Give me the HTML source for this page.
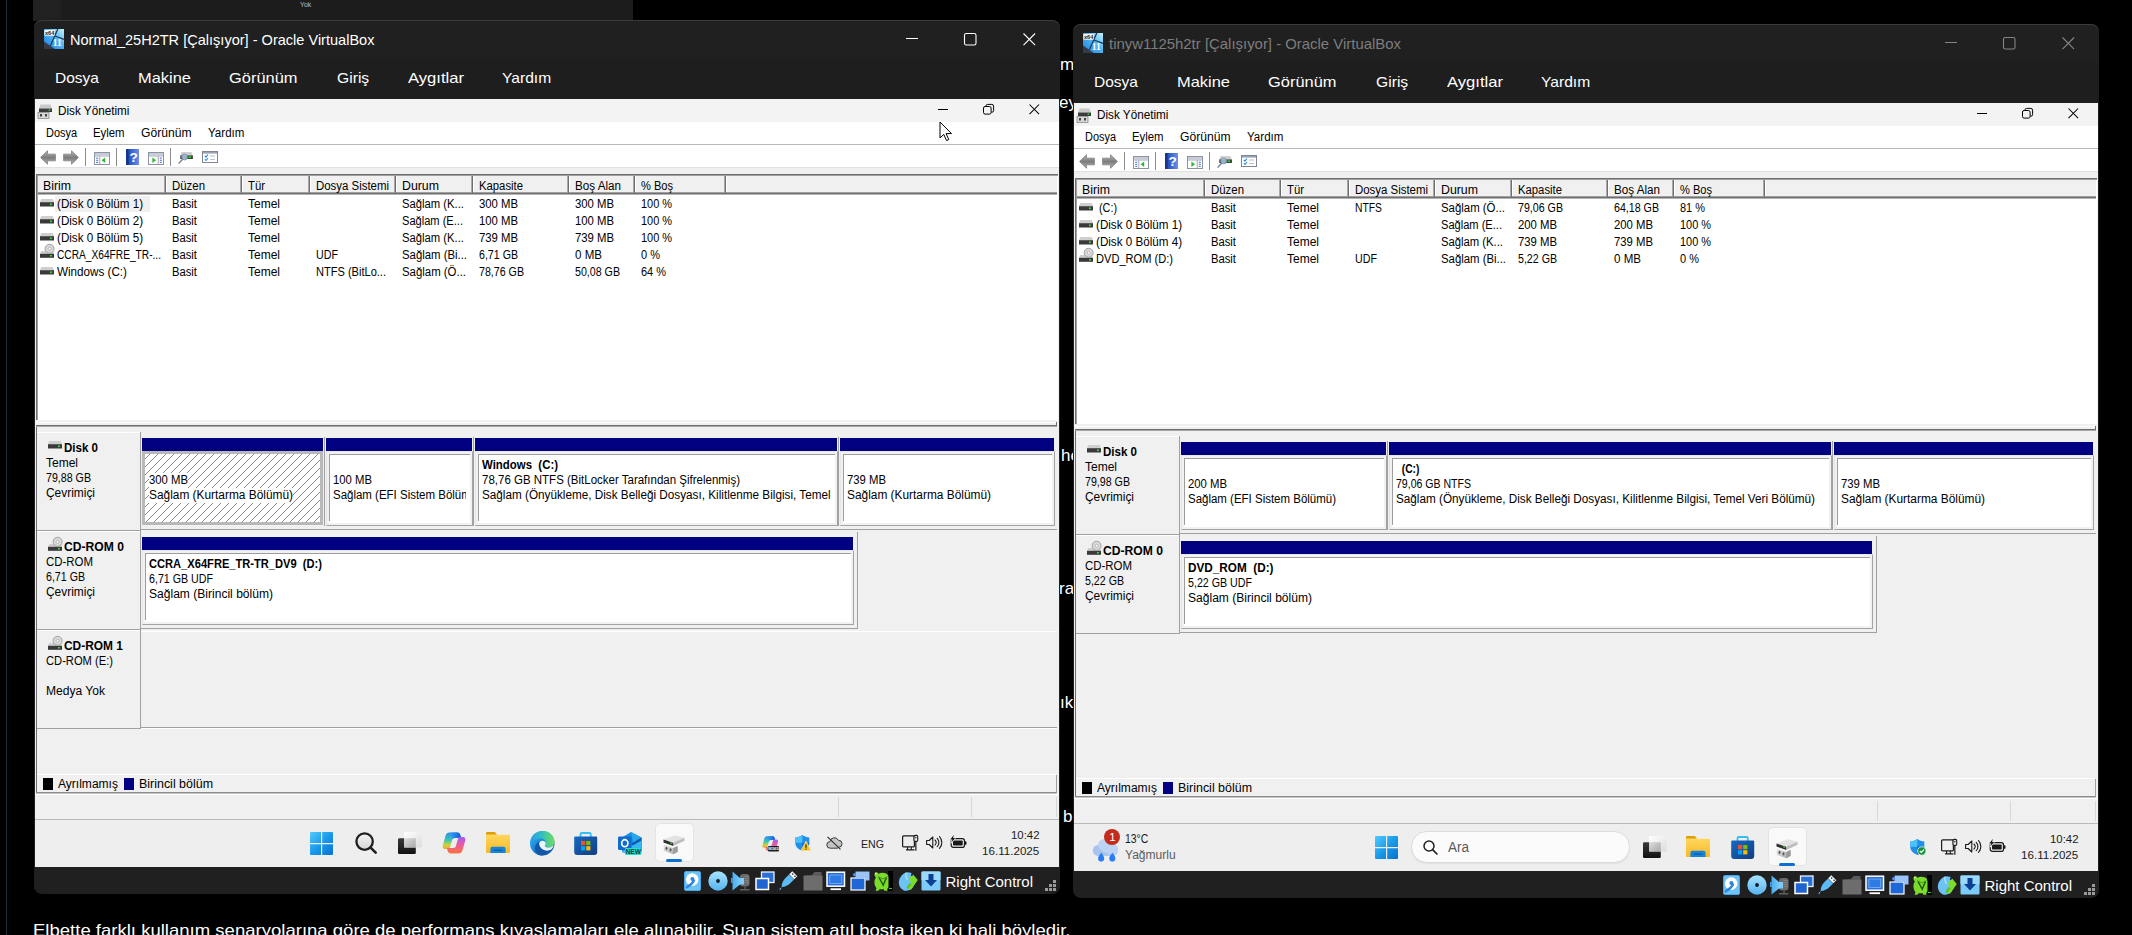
<!DOCTYPE html>
<html lang="tr"><head><meta charset="utf-8"><title>VirtualBox - Disk Yönetimi</title>
<style>
html,body{margin:0;padding:0;background:#000;}
html{width:2132px;height:935px;overflow:hidden;font-family:"Liberation Sans", sans-serif;}
body{width:2132px;height:935px;overflow:hidden;position:relative;font-family:"Liberation Sans", sans-serif;font-size:12px;line-height:12px;color:#000;}
#root{position:absolute;left:0;top:0;width:2132px;height:935px;overflow:hidden;background:#000;}
.a{position:absolute;display:block;}
.t{position:absolute;white-space:pre;transform-origin:left top;}
.win{position:absolute;width:1026px;height:874px;background:#202020;border-radius:8px;overflow:hidden;box-shadow:inset 0 1px 0 #3b3b3b;}
.guest{position:absolute;left:1px;top:79px;width:1024px;height:768px;background:#f0f0f0;overflow:hidden;}
svg{overflow:visible}
</style></head>
<body>
<div id="root">
<div class="a" style="left:33px;top:0px;width:600px;height:21px;background:#1c1c1c;"></div><div class="a" style="left:33px;top:0px;width:28px;height:21px;background:#212121;"></div><span id="t0" class="t" style="left:300px;top:2px;font-size:6.8px;line-height:6.8px;color:#bdbdbd;">Yok</span><div class="a" style="left:6px;top:0px;width:1px;height:935px;background:#15303f;"></div><div class="a" style="left:1059px;top:0;width:15px;height:935px;overflow:hidden"><span id="t1" class="t" style="left:1px;top:55.5px;font-size:17px;line-height:17px;color:#fff;">m</span><span id="t2" class="t" style="left:0px;top:93.5px;font-size:17px;line-height:17px;color:#fff;">ey</span><span id="t3" class="t" style="left:2px;top:446.5px;font-size:17px;line-height:17px;color:#fff;">he</span><span id="t4" class="t" style="left:0px;top:579.5px;font-size:17px;line-height:17px;color:#fff;">ra</span><span id="t5" class="t" style="left:1px;top:693.5px;font-size:17px;line-height:17px;color:#fff;">ık</span><span id="t6" class="t" style="left:4px;top:807.5px;font-size:17px;line-height:17px;color:#fff;">b</span></div><span id="t7" class="t" style="left:33px;top:922px;font-size:17px;line-height:17px;color:#fff;transform:scaleX(1.0903);">Elbette farklı kullanım senaryolarına göre de performans kıyaslamaları ele alınabilir. Şuan sistem atıl boşta iken ki hali böyledir.</span><div class="win" style="left:34px;top:20px"><div class="a" style="left:0px;top:38px;width:1026px;height:41px;background:#1e1e1e;"></div><svg class="a" style="left:10px;top:9px;" width="20" height="20" viewBox="0 0 20 20"><defs><linearGradient id="vbg" x1="0" y1="1" x2="1" y2="0"><stop offset="0" stop-color="#1b7fe0"/><stop offset=".55" stop-color="#4fb4f2"/><stop offset="1" stop-color="#c9f1ff"/></linearGradient></defs>
<rect width="20" height="20" fill="url(#vbg)"/>
<polygon points="0,12.5 10.8,20 0,20" fill="#353a48"/>
<path d="M13.8 0 L6.4 16.8 M11 7 L20 10.3" stroke="#1d3a5c" stroke-width="1.3" fill="none"/>
<rect x="0.3" y="1" width="10.6" height="5.8" rx="1.2" fill="#f4f4f4"/>
<text x="5.6" y="6" font-family="Liberation Sans" font-size="5.6" font-weight="700" text-anchor="middle" fill="#222">x64</text>
<text x="13.2" y="17" font-family="Liberation Serif" font-size="9.5" font-weight="700" text-anchor="middle" fill="#fff">11</text></svg><span id="t8" class="t" style="left:36px;top:11.5px;font-size:15px;line-height:15px;color:#fff;transform:scaleX(0.9697);">Normal_25H2TR [Çalışıyor] - Oracle VirtualBox</span><svg class="a" style="left:866px;top:6px;" width="150" height="26" viewBox="0 0 150 26"><path d="M6 12.500h12" stroke="#fff" stroke-width="1.100"/><rect x="64.500" y="7.500" width="11.500" height="11.500" rx="1.800" fill="none" stroke="#fff" stroke-width="1.100"/><path d="M123.500 7.500l11.600 11.600M135.100 7.500l-11.600 11.600" stroke="#fff" stroke-width="1.100"/></svg><span id="t9" class="t" style="left:21.4px;top:50.5px;font-size:14.6px;line-height:14.6px;color:#fff;transform:scaleX(1.0634);">Dosya</span><span id="t10" class="t" style="left:104px;top:50.5px;font-size:14.6px;line-height:14.6px;color:#fff;transform:scaleX(1.1265);">Makine</span><span id="t11" class="t" style="left:195px;top:50.5px;font-size:14.6px;line-height:14.6px;color:#fff;transform:scaleX(1.1258);">Görünüm</span><span id="t12" class="t" style="left:302.5px;top:50.5px;font-size:14.6px;line-height:14.6px;color:#fff;transform:scaleX(1.0733);">Giriş</span><span id="t13" class="t" style="left:374px;top:50.5px;font-size:14.6px;line-height:14.6px;color:#fff;transform:scaleX(1.1378);">Aygıtlar</span><span id="t14" class="t" style="left:468.3px;top:50.5px;font-size:14.6px;line-height:14.6px;color:#fff;transform:scaleX(1.0703);">Yardım</span><div class="guest"><div class="a" style="left:0px;top:0px;width:1024px;height:23px;background:#f3f3f3;"></div><svg class="a" style="left:2px;top:4px;" width="16" height="16" viewBox="0 0 16 16"><path d="M3.5 1.5h10l1.5 4h-13z" fill="#c9c9c9"/><rect x="2" y="5.5" width="13" height="3.5" fill="#3c3c3c"/><rect x="11.6" y="6.4" width="1.6" height="1.4" fill="#35d335"/>
<rect x="1" y="9.5" width="11" height="6" fill="#d8d8d8" stroke="#8a8a8a" stroke-width=".8"/><rect x="3" y="11" width="2" height="2.5" fill="#444"/><rect x="8" y="11" width="2" height="2.5" fill="#444"/></svg><span id="t15" class="t" style="left:23px;top:6px;transform:scaleX(0.9762);">Disk Yönetimi</span><svg class="a" style="left:898px;top:0px;" width="116" height="23" viewBox="0 0 116 23"><path d="M5 10.5h10" stroke="#000" stroke-width="1"/><rect x="50.5" y="7.5" width="7.6" height="7.6" rx="1.6" fill="none" stroke="#000"/><path d="M53 7.3V7a1.6 1.6 0 0 1 1.6-1.6h4.2A1.8 1.8 0 0 1 60.6 7.2v4.4a1.6 1.6 0 0 1-1.6 1.6h-.6" fill="none" stroke="#000"/><path d="M96.5 5.5l9.6 9.6M106.1 5.5l-9.6 9.6" stroke="#000" stroke-width="1.05"/></svg><div class="a" style="left:0px;top:23px;width:1024px;height:22px;background:#fff;"></div><span id="t16" class="t" style="left:10.6px;top:27.5px;transform:scaleX(0.9113);">Dosya</span><span id="t17" class="t" style="left:58px;top:27.5px;transform:scaleX(0.9477);">Eylem</span><span id="t18" class="t" style="left:106px;top:27.5px;transform:scaleX(1.0094);">Görünüm</span><span id="t19" class="t" style="left:173px;top:27.5px;transform:scaleX(0.9630);">Yardım</span><div class="a" style="left:0px;top:45px;width:1024px;height:1px;background:#b8b8b8;"></div><div class="a" style="left:0px;top:46px;width:1024px;height:22px;background:#fff;"></div><svg class="a" style="left:5px;top:51px;" width="16" height="15" viewBox="0 0 16 15"><defs><linearGradient id="ag" x1="0" y1="0" x2="0" y2="1"><stop offset="0" stop-color="#b9b9b9"/><stop offset=".5" stop-color="#7d7d7d"/><stop offset="1" stop-color="#b0b0b0"/></linearGradient></defs><path d="M0.6 7.5 L7.5 0.8 V4.2 H15.4 V10.8 H7.5 V14.2 Z" fill="url(#ag)" stroke="#8f8f8f" stroke-width="1" stroke-linejoin="round"/></svg><svg class="a" style="left:28px;top:51px;" width="16" height="15" viewBox="0 0 16 15"><g transform="translate(16,0) scale(-1,1)"><defs><linearGradient id="ag2" x1="0" y1="0" x2="0" y2="1"><stop offset="0" stop-color="#b9b9b9"/><stop offset=".5" stop-color="#7d7d7d"/><stop offset="1" stop-color="#b0b0b0"/></linearGradient></defs><path d="M0.6 7.5 L7.5 0.8 V4.2 H15.4 V10.8 H7.5 V14.2 Z" fill="url(#ag2)" stroke="#8f8f8f" stroke-width="1" stroke-linejoin="round"/></g></svg><div class="a" style="left:50px;top:49px;width:1px;height:18px;background:#8c8c8c;"></div><div class="a" style="left:81px;top:49px;width:1px;height:18px;background:#8c8c8c;"></div><div class="a" style="left:135px;top:49px;width:1px;height:18px;background:#8c8c8c;"></div><svg class="a" style="left:59px;top:53px;" width="16" height="13" viewBox="0 0 16 13"><rect x=".5" y=".5" width="15" height="12" fill="#fff" stroke="#8b93a5"/><rect x="1" y="1" width="14" height="2.2" fill="#c7ccd8"/><rect x="1" y="3.6" width="14" height=".8" fill="#8b93a5"/><rect x="5.4" y="4.4" width=".8" height="8" fill="#8b93a5"/><path d="M2.2 6.2h2M2.2 8.3h2M2.2 10.4h2" stroke="#2f6fd6" stroke-width="1"/><path d="M11.2 5.6v5.4L7.6 8.3z" fill="#2fb52f"/></svg><svg class="a" style="left:91px;top:50px;" width="13" height="16" viewBox="0 0 13 16"><defs><linearGradient id="hg" x1="0" y1="0" x2="1" y2="0"><stop offset="0" stop-color="#1c3f9e"/><stop offset=".3" stop-color="#2b57c8"/><stop offset="1" stop-color="#6f8fe8"/></linearGradient></defs><rect width="13" height="16" fill="url(#hg)"/><rect width="2.6" height="16" fill="#17358a"/><text x="7.6" y="13" font-family="Liberation Sans" font-weight="700" font-size="13.5" text-anchor="middle" fill="#fff">?</text></svg><svg class="a" style="left:113px;top:53px;" width="16" height="13" viewBox="0 0 16 13"><rect x=".5" y=".5" width="15" height="12" fill="#fff" stroke="#8b93a5"/><rect x="1" y="1" width="14" height="2.2" fill="#c7ccd8"/><rect x="1" y="3.6" width="14" height=".8" fill="#8b93a5"/><rect x="9.8" y="4.4" width=".8" height="8" fill="#8b93a5"/><path d="M11.8 6.2h2M11.8 8.3h2M11.8 10.4h2" stroke="#2f6fd6" stroke-width="1"/><path d="M4.4 5.6v5.4L8 8.3z" fill="#2fb52f"/></svg><svg class="a" style="left:143px;top:52px;" width="16" height="14" viewBox="0 0 16 14"><path d="M3.5 1h10l1.2 3.4H2.3z" fill="#cfcfcf"/><rect x="2.3" y="4.4" width="12.6" height="3.6" fill="#3a3a3a"/><rect x="10.5" y="5.3" width="2.6" height="1.8" fill="#28d028"/><circle cx="6.6" cy="6" r="2.9" fill="#a9c7e8" fill-opacity=".85" stroke="#7b8da3" stroke-width=".9"/><path d="M4.6 8.2L0.6 12.6" stroke="#6c7a8a" stroke-width="1.3"/></svg><svg class="a" style="left:167px;top:52px;" width="16" height="12" viewBox="0 0 16 12"><rect x=".5" y=".5" width="15" height="11" fill="#fff" stroke="#7f8796"/><rect x="1" y="1" width="14" height="1.6" fill="#9aa1b0"/><path d="M2.8 4.8l1.2 1.3 2-2.4M2.8 8.2l1.2 1.3 2-2.4" stroke="#2e8be6" stroke-width="1.1" fill="none"/><path d="M8 5h5M8 8.6h5" stroke="#b8bcc6" stroke-width="1"/></svg><div class="a" style="left:0px;top:68px;width:1024px;height:1px;background:#e2e2e2;"></div><div class="a" style="left:1px;top:75px;width:1022px;height:246px;background:#fff;"></div><div class="a" style="left:1px;top:75px;width:1022px;height:1px;background:#707070;"></div><div class="a" style="left:1px;top:76px;width:1022px;height:1px;background:#a0a0a0;"></div><div class="a" style="left:1px;top:75px;width:1px;height:246px;background:#707070;"></div><div class="a" style="left:2px;top:76px;width:1px;height:245px;background:#a0a0a0;"></div><div class="a" style="left:3px;top:77px;width:1019px;height:17px;background:#f0f0f0;"></div><div class="a" style="left:3px;top:93px;width:1019px;height:1px;background:#a0a0a0;"></div><div class="a" style="left:3px;top:94px;width:1019px;height:1px;background:#6f6f6f;"></div><div class="a" style="left:3px;top:95px;width:1019px;height:1px;background:#b4b4b4;"></div><span id="t20" class="t" style="left:8px;top:81px;transform:scaleX(1.0246);">Birim</span><span id="t21" class="t" style="left:137px;top:81px;transform:scaleX(0.9514);">Düzen</span><span id="t22" class="t" style="left:213px;top:81px;transform:scaleX(0.9444);">Tür</span><span id="t23" class="t" style="left:281px;top:81px;transform:scaleX(0.9519);">Dosya Sistemi</span><span id="t24" class="t" style="left:367px;top:81px;transform:scaleX(1.0273);">Durum</span><span id="t25" class="t" style="left:444px;top:81px;transform:scaleX(0.9421);">Kapasite</span><span id="t26" class="t" style="left:540px;top:81px;transform:scaleX(0.9710);">Boş Alan</span><span id="t27" class="t" style="left:606px;top:81px;transform:scaleX(0.9225);">% Boş</span><div class="a" style="left:129px;top:77px;width:1px;height:16px;background:#a9a9a9;"></div><div class="a" style="left:130px;top:77px;width:1px;height:17px;background:#6f6f6f;"></div><div class="a" style="left:131px;top:77px;width:1px;height:16px;background:#fff;"></div><div class="a" style="left:205px;top:77px;width:1px;height:16px;background:#a9a9a9;"></div><div class="a" style="left:206px;top:77px;width:1px;height:17px;background:#6f6f6f;"></div><div class="a" style="left:207px;top:77px;width:1px;height:16px;background:#fff;"></div><div class="a" style="left:273px;top:77px;width:1px;height:16px;background:#a9a9a9;"></div><div class="a" style="left:274px;top:77px;width:1px;height:17px;background:#6f6f6f;"></div><div class="a" style="left:275px;top:77px;width:1px;height:16px;background:#fff;"></div><div class="a" style="left:359px;top:77px;width:1px;height:16px;background:#a9a9a9;"></div><div class="a" style="left:360px;top:77px;width:1px;height:17px;background:#6f6f6f;"></div><div class="a" style="left:361px;top:77px;width:1px;height:16px;background:#fff;"></div><div class="a" style="left:436px;top:77px;width:1px;height:16px;background:#a9a9a9;"></div><div class="a" style="left:437px;top:77px;width:1px;height:17px;background:#6f6f6f;"></div><div class="a" style="left:438px;top:77px;width:1px;height:16px;background:#fff;"></div><div class="a" style="left:532px;top:77px;width:1px;height:16px;background:#a9a9a9;"></div><div class="a" style="left:533px;top:77px;width:1px;height:17px;background:#6f6f6f;"></div><div class="a" style="left:534px;top:77px;width:1px;height:16px;background:#fff;"></div><div class="a" style="left:598px;top:77px;width:1px;height:16px;background:#a9a9a9;"></div><div class="a" style="left:599px;top:77px;width:1px;height:17px;background:#6f6f6f;"></div><div class="a" style="left:600px;top:77px;width:1px;height:16px;background:#fff;"></div><div class="a" style="left:689px;top:77px;width:1px;height:16px;background:#a9a9a9;"></div><div class="a" style="left:690px;top:77px;width:1px;height:17px;background:#6f6f6f;"></div><div class="a" style="left:691px;top:77px;width:1px;height:16px;background:#fff;"></div><div class="a" style="left:20px;top:97px;width:95px;height:16px;background:#f0f0f0;"></div><svg class="a" style="left:5px;top:100px;" width="14" height="8" viewBox="0 0 14 8"><path d="M1.2 0h11.6l1.2 3.2H0z" fill="#cfcfcf"/><rect x="0" y="3.2" width="14" height="4.3" fill="#3a3a3a"/><rect x="10" y="4.5" width="1.8" height="1.6" fill="#3fe03f"/></svg><span id="t28" class="t" style="left:22px;top:98.5px;transform:scaleX(0.9697);">(Disk 0 Bölüm 1)</span><span id="t29" class="t" style="left:137px;top:98.5px;transform:scaleX(0.9368);">Basit</span><span id="t30" class="t" style="left:213px;top:98.5px;">Temel</span><span id="t31" class="t" style="left:367px;top:98.5px;transform:scaleX(0.9389);">Sağlam (K...</span><span id="t32" class="t" style="left:444px;top:98.5px;transform:scaleX(0.9430);">300 MB</span><span id="t33" class="t" style="left:540px;top:98.5px;transform:scaleX(0.9430);">300 MB</span><span id="t34" class="t" style="left:606px;top:98.5px;transform:scaleX(0.9109);">100 %</span><svg class="a" style="left:5px;top:117px;" width="14" height="8" viewBox="0 0 14 8"><path d="M1.2 0h11.6l1.2 3.2H0z" fill="#cfcfcf"/><rect x="0" y="3.2" width="14" height="4.3" fill="#3a3a3a"/><rect x="10" y="4.5" width="1.8" height="1.6" fill="#3fe03f"/></svg><span id="t35" class="t" style="left:22px;top:115.5px;transform:scaleX(0.9697);">(Disk 0 Bölüm 2)</span><span id="t36" class="t" style="left:137px;top:115.5px;transform:scaleX(0.9368);">Basit</span><span id="t37" class="t" style="left:213px;top:115.5px;">Temel</span><span id="t38" class="t" style="left:367px;top:115.5px;transform:scaleX(0.9238);">Sağlam (E...</span><span id="t39" class="t" style="left:444px;top:115.5px;transform:scaleX(0.9430);">100 MB</span><span id="t40" class="t" style="left:540px;top:115.5px;transform:scaleX(0.9430);">100 MB</span><span id="t41" class="t" style="left:606px;top:115.5px;transform:scaleX(0.9109);">100 %</span><svg class="a" style="left:5px;top:134px;" width="14" height="8" viewBox="0 0 14 8"><path d="M1.2 0h11.6l1.2 3.2H0z" fill="#cfcfcf"/><rect x="0" y="3.2" width="14" height="4.3" fill="#3a3a3a"/><rect x="10" y="4.5" width="1.8" height="1.6" fill="#3fe03f"/></svg><span id="t42" class="t" style="left:22px;top:132.5px;transform:scaleX(0.9697);">(Disk 0 Bölüm 5)</span><span id="t43" class="t" style="left:137px;top:132.5px;transform:scaleX(0.9368);">Basit</span><span id="t44" class="t" style="left:213px;top:132.5px;">Temel</span><span id="t45" class="t" style="left:367px;top:132.5px;transform:scaleX(0.9389);">Sağlam (K...</span><span id="t46" class="t" style="left:444px;top:132.5px;transform:scaleX(0.9430);">739 MB</span><span id="t47" class="t" style="left:540px;top:132.5px;transform:scaleX(0.9430);">739 MB</span><span id="t48" class="t" style="left:606px;top:132.5px;transform:scaleX(0.9109);">100 %</span><svg class="a" style="left:5px;top:145px;" width="15" height="14" viewBox="0 0 15 14"><path d="M1.2 7h11.6l1.2 3H0z" fill="#cfcfcf"/><rect x="0" y="9.8" width="14" height="4" fill="#3a3a3a"/><rect x="10" y="11" width="1.8" height="1.5" fill="#3fe03f"/>
<circle cx="9.6" cy="4.8" r="4.5" fill="#d9d9d9" stroke="#9a9a9a" stroke-width=".9"/><circle cx="9.6" cy="4.8" r="1.5" fill="#fff" stroke="#9a9a9a" stroke-width=".6"/></svg><span id="t49" class="t" style="left:22px;top:149.5px;transform:scaleX(0.8476);">CCRA_X64FRE_TR-...</span><span id="t50" class="t" style="left:137px;top:149.5px;transform:scaleX(0.9368);">Basit</span><span id="t51" class="t" style="left:213px;top:149.5px;">Temel</span><span id="t52" class="t" style="left:281px;top:149.5px;transform:scaleX(0.8917);">UDF</span><span id="t53" class="t" style="left:367px;top:149.5px;transform:scaleX(0.9461);">Sağlam (Bi...</span><span id="t54" class="t" style="left:444px;top:149.5px;transform:scaleX(0.8857);">6,71 GB</span><span id="t55" class="t" style="left:540px;top:149.5px;transform:scaleX(0.9637);">0 MB</span><span id="t56" class="t" style="left:606px;top:149.5px;transform:scaleX(0.9184);">0 %</span><svg class="a" style="left:5px;top:168px;" width="14" height="8" viewBox="0 0 14 8"><path d="M1.2 0h11.6l1.2 3.2H0z" fill="#cfcfcf"/><rect x="0" y="3.2" width="14" height="4.3" fill="#3a3a3a"/><rect x="10" y="4.5" width="1.8" height="1.6" fill="#3fe03f"/></svg><span id="t57" class="t" style="left:22px;top:166.5px;transform:scaleX(0.9720);">Windows (C:)</span><span id="t58" class="t" style="left:137px;top:166.5px;transform:scaleX(0.9368);">Basit</span><span id="t59" class="t" style="left:213px;top:166.5px;">Temel</span><span id="t60" class="t" style="left:281px;top:166.5px;transform:scaleX(0.9209);">NTFS (BitLo...</span><span id="t61" class="t" style="left:367px;top:166.5px;transform:scaleX(0.9501);">Sağlam (Ö...</span><span id="t62" class="t" style="left:444px;top:166.5px;transform:scaleX(0.8875);">78,76 GB</span><span id="t63" class="t" style="left:540px;top:166.5px;transform:scaleX(0.8875);">50,08 GB</span><span id="t64" class="t" style="left:606px;top:166.5px;transform:scaleX(0.9138);">64 %</span><div class="a" style="left:1px;top:323px;width:1021px;height:1px;background:#fcfcfc;"></div><div class="a" style="left:1px;top:326px;width:1021px;height:1px;background:#6d6d6d;"></div><div class="a" style="left:1px;top:327px;width:1021px;height:1px;background:#a9a9a9;"></div><div class="a" style="left:1021px;top:323px;width:1px;height:4px;background:#6d6d6d;"></div><div class="a" style="left:1px;top:328px;width:1px;height:366px;background:#6d6d6d;"></div><div class="a" style="left:2px;top:333px;width:103px;height:1px;background:#fff;"></div><div class="a" style="left:105px;top:333px;width:1px;height:99px;background:#a0a0a0;"></div><div class="a" style="left:2px;top:431px;width:104px;height:1px;background:#a0a0a0;"></div><svg class="a" style="left:13px;top:342px;" width="14" height="8" viewBox="0 0 14 8"><path d="M1.2 0h11.6l1.2 3.2H0z" fill="#cfcfcf"/><rect x="0" y="3.2" width="14" height="4.3" fill="#3a3a3a"/><rect x="10" y="4.5" width="1.8" height="1.6" fill="#3fe03f"/></svg><span id="t65" class="t" style="left:29px;top:343px;font-weight:700;transform:scaleX(0.9616);">Disk 0</span><span id="t66" class="t" style="left:11px;top:358px;">Temel</span><span id="t67" class="t" style="left:11px;top:373px;transform:scaleX(0.8875);">79,88 GB</span><span id="t68" class="t" style="left:11px;top:388px;transform:scaleX(0.9930);">Çevrimiçi</span><div class="a" style="left:107px;top:339px;width:181px;height:13px;background:#000080;"></div><div class="a" style="left:107px;top:352px;width:181px;height:74px;background:#b9b9b9;"></div><div class="a" style="left:110px;top:355px;width:175px;height:68px;background:repeating-linear-gradient(135deg,#fff 0,#fff 3.4px,#8a8a8a 3.4px,#8a8a8a 4.2px,#fff 4.2px,#fff 5.657px);"></div><span id="t69" class="t" style="left:114px;top:375px;transform:scaleX(0.9430);background:#fff;padding:1px 0 2px;margin-top:-1px;">300 MB</span><span id="t70" class="t" style="left:114px;top:390px;transform:scaleX(0.9904);background:#fff;padding:1px 0 2px;margin-top:-1px;">Sağlam (Kurtarma Bölümü)</span><div class="a" style="left:289px;top:338px;width:1px;height:89px;background:#a0a0a0;"></div><div class="a" style="left:291px;top:339px;width:146px;height:13px;background:#000080;"></div><div class="a" style="left:291px;top:352px;width:147px;height:75px;background:#fff;box-sizing:border-box;border:1px solid #a3a3a3;border-left-color:#e6e6e6;border-top-color:#e6e6e6;box-shadow:inset 0 0 0 2px #f1f1f1;"></div><div class="a" style="left:294px;top:355px;width:141px;height:1px;background:#9d9d9d;"></div><div class="a" style="left:294px;top:355px;width:1px;height:67px;background:#9d9d9d;"></div><div class="a" style="left:0;top:0;width:431px;height:768px;overflow:hidden"><span id="t71" class="t" style="left:298px;top:375px;transform:scaleX(0.9430);">100 MB</span><span id="t72" class="t" style="left:298px;top:390px;transform:scaleX(0.9566);">Sağlam (EFI Sistem Bölümü)</span></div><div class="a" style="left:438px;top:338px;width:1px;height:89px;background:#a0a0a0;"></div><div class="a" style="left:440px;top:339px;width:362px;height:13px;background:#000080;"></div><div class="a" style="left:440px;top:352px;width:363px;height:75px;background:#fff;box-sizing:border-box;border:1px solid #a3a3a3;border-left-color:#e6e6e6;border-top-color:#e6e6e6;box-shadow:inset 0 0 0 2px #f1f1f1;"></div><div class="a" style="left:443px;top:355px;width:357px;height:1px;background:#9d9d9d;"></div><div class="a" style="left:443px;top:355px;width:1px;height:67px;background:#9d9d9d;"></div><div class="a" style="left:0;top:0;width:796px;height:768px;overflow:hidden"><span id="t73" class="t" style="left:447px;top:360px;font-weight:700;transform:scaleX(0.9515);">Windows&nbsp; (C:)</span><span id="t74" class="t" style="left:447px;top:375px;transform:scaleX(0.9583);">78,76 GB NTFS (BitLocker Tarafından Şifrelenmiş)</span><span id="t75" class="t" style="left:447px;top:390px;transform:scaleX(0.9776);">Sağlam (Önyükleme, Disk Belleği Dosyası, Kilitlenme Bilgisi, Temel Veri Bölümü)</span></div><div class="a" style="left:803px;top:338px;width:1px;height:89px;background:#a0a0a0;"></div><div class="a" style="left:805px;top:339px;width:214px;height:13px;background:#000080;"></div><div class="a" style="left:805px;top:352px;width:215px;height:75px;background:#fff;box-sizing:border-box;border:1px solid #a3a3a3;border-left-color:#e6e6e6;border-top-color:#e6e6e6;box-shadow:inset 0 0 0 2px #f1f1f1;"></div><div class="a" style="left:808px;top:355px;width:209px;height:1px;background:#9d9d9d;"></div><div class="a" style="left:808px;top:355px;width:1px;height:67px;background:#9d9d9d;"></div><span id="t76" class="t" style="left:812px;top:375px;transform:scaleX(0.9430);">739 MB</span><span id="t77" class="t" style="left:812px;top:390px;transform:scaleX(0.9904);">Sağlam (Kurtarma Bölümü)</span><div class="a" style="left:106px;top:430px;width:916px;height:1px;background:#a0a0a0;"></div><div class="a" style="left:2px;top:432px;width:103px;height:1px;background:#fff;"></div><div class="a" style="left:105px;top:432px;width:1px;height:99px;background:#a0a0a0;"></div><div class="a" style="left:2px;top:530px;width:104px;height:1px;background:#a0a0a0;"></div><svg class="a" style="left:13.3px;top:437.5px;" width="15" height="14" viewBox="0 0 15 14"><path d="M1.2 7h11.6l1.2 3H0z" fill="#cfcfcf"/><rect x="0" y="9.8" width="14" height="4" fill="#3a3a3a"/><rect x="10" y="11" width="1.8" height="1.5" fill="#3fe03f"/>
<circle cx="9.6" cy="4.8" r="4.5" fill="#d9d9d9" stroke="#9a9a9a" stroke-width=".9"/><circle cx="9.6" cy="4.8" r="1.5" fill="#fff" stroke="#9a9a9a" stroke-width=".6"/></svg><span id="t78" class="t" style="left:29px;top:442px;font-weight:700;transform:scaleX(1.0111);">CD-ROM 0</span><span id="t79" class="t" style="left:11px;top:457px;transform:scaleX(0.9528);">CD-ROM</span><span id="t80" class="t" style="left:11px;top:472px;transform:scaleX(0.8857);">6,71 GB</span><span id="t81" class="t" style="left:11px;top:487px;transform:scaleX(0.9930);">Çevrimiçi</span><div class="a" style="left:106px;top:433px;width:717px;height:97px;border-right:1px solid #a0a0a0;border-bottom:1px solid #a0a0a0;box-sizing:border-box;"></div><div class="a" style="left:107px;top:438px;width:711px;height:13px;background:#000080;"></div><div class="a" style="left:107px;top:451px;width:712px;height:75px;background:#fff;box-sizing:border-box;border:1px solid #a3a3a3;border-left-color:#e6e6e6;border-top-color:#e6e6e6;box-shadow:inset 0 0 0 2px #f1f1f1;"></div><div class="a" style="left:110px;top:454px;width:706px;height:1px;background:#9d9d9d;"></div><div class="a" style="left:110px;top:454px;width:1px;height:67px;background:#9d9d9d;"></div><span id="t82" class="t" style="left:114px;top:459px;font-weight:700;transform:scaleX(0.9266);">CCRA_X64FRE_TR-TR_DV9&nbsp; (D:)</span><span id="t83" class="t" style="left:114px;top:474px;transform:scaleX(0.8885);">6,71 GB UDF</span><span id="t84" class="t" style="left:114px;top:489px;transform:scaleX(1.0051);">Sağlam (Birincil bölüm)</span><div class="a" style="left:2px;top:531px;width:103px;height:1px;background:#fff;"></div><div class="a" style="left:105px;top:531px;width:1px;height:99px;background:#a0a0a0;"></div><div class="a" style="left:2px;top:629px;width:104px;height:1px;background:#a0a0a0;"></div><svg class="a" style="left:13.3px;top:536.5px;" width="15" height="14" viewBox="0 0 15 14"><path d="M1.2 7h11.6l1.2 3H0z" fill="#cfcfcf"/><rect x="0" y="9.8" width="14" height="4" fill="#3a3a3a"/><rect x="10" y="11" width="1.8" height="1.5" fill="#3fe03f"/>
<circle cx="9.6" cy="4.8" r="4.5" fill="#d9d9d9" stroke="#9a9a9a" stroke-width=".9"/><circle cx="9.6" cy="4.8" r="1.5" fill="#fff" stroke="#9a9a9a" stroke-width=".6"/></svg><span id="t85" class="t" style="left:29px;top:541px;font-weight:700;transform:scaleX(0.9942);">CD-ROM 1</span><span id="t86" class="t" style="left:11px;top:556px;transform:scaleX(0.9306);">CD-ROM (E:)</span><span id="t87" class="t" style="left:11px;top:586px;transform:scaleX(1.0048);">Medya Yok</span><div class="a" style="left:106px;top:532px;width:916px;height:1px;background:#fff;"></div><div class="a" style="left:106px;top:628px;width:916px;height:1px;background:#a0a0a0;"></div><div class="a" style="left:106px;top:629px;width:916px;height:1px;background:#fff;"></div><div class="a" style="left:2px;top:675px;width:1019px;height:1px;background:#fff;"></div><div class="a" style="left:8px;top:679px;width:10px;height:12px;background:#000;"></div><div class="a" style="left:89px;top:679px;width:10px;height:12px;background:#000080;"></div><span id="t88" class="t" style="left:23px;top:679px;transform:scaleX(1.0034);">Ayrılmamış</span><span id="t89" class="t" style="left:104px;top:679px;transform:scaleX(1.0370);">Birincil bölüm</span><div class="a" style="left:1px;top:693px;width:1021px;height:1px;background:#8c8c8c;"></div><div class="a" style="left:1px;top:694px;width:1021px;height:1px;background:#c4c4c4;"></div><div class="a" style="left:1021px;top:676px;width:1px;height:18px;background:#a0a0a0;"></div><div class="a" style="left:0px;top:695px;width:1024px;height:1px;background:#fff;"></div><div class="a" style="left:803px;top:698px;width:1px;height:20px;background:#d7d7d7;"></div><div class="a" style="left:936px;top:698px;width:1px;height:20px;background:#d7d7d7;"></div><div class="a" style="left:1021px;top:698px;width:1px;height:20px;background:#d7d7d7;"></div><div class="a" style="left:0px;top:720px;width:1024px;height:1px;background:#b9b9b9;"></div><div class="a" style="left:0px;top:721px;width:1024px;height:47px;background:#eeeeee;"></div><svg class="a" style="left:275px;top:733px;" width="23" height="23" viewBox="0 0 23 23"><defs><linearGradient id="wg" x1="0" y1="0" x2="1" y2="1"><stop offset="0" stop-color="#52cbfb"/><stop offset=".5" stop-color="#1a9aea"/><stop offset="1" stop-color="#0672cf"/></linearGradient></defs>
<path d="M1 0h10v11H0V1a1 1 0 0 1 1-1zM12.2 0H22a1 1 0 0 1 1 1v10H12.2zM0 12.2h11V23H1a1 1 0 0 1-1-1zM12.2 12.2H23V22a1 1 0 0 1-1 1h-9.8z" fill="url(#wg)"/></svg><svg class="a" style="left:320px;top:732.5px;" width="23" height="23" viewBox="0 0 23 23"><defs><linearGradient id="sg" x1="0" y1="0" x2="0" y2="1"><stop offset="0" stop-color="#f4f4f4"/><stop offset="1" stop-color="#d6d6d6"/></linearGradient></defs>
<circle cx="9.6" cy="9.6" r="8.2" fill="url(#sg)" stroke="#1f1f1f" stroke-width="2.3"/><path d="M15.6 15.6L20.700 20.700" stroke="#1f1f1f" stroke-width="2.6" stroke-linecap="round"/></svg><svg class="a" style="left:363px;top:733px;" width="24" height="22" viewBox="0 0 24 22"><defs><linearGradient id="tv1" x1="0" y1="0" x2="0" y2="1"><stop offset="0" stop-color="#3a3a3a"/><stop offset="1" stop-color="#111"/></linearGradient><linearGradient id="tv2" x1="0" y1="0" x2="1" y2="1"><stop offset="0" stop-color="#fff"/><stop offset="1" stop-color="#dcdcdc"/></linearGradient><linearGradient id="tv3" x1="0" y1="0" x2="1" y2="1"><stop offset="0" stop-color="#dedede"/><stop offset="1" stop-color="#a8a8a8"/></linearGradient></defs>
<rect x="0" y="6.2" width="17.8" height="15.8" rx="1.2" fill="url(#tv1)"/><rect x="6" y="0" width="17.8" height="15.5" rx="1.2" fill="url(#tv2)"/><path d="M6 6.2h11.8v9.3H6z" fill="url(#tv3)"/></svg><svg class="a" style="left:407px;top:733px;" width="24" height="22" viewBox="0 0 24 22"><defs><linearGradient id="c1" x1="0" y1="0" x2="0" y2="1"><stop offset="0" stop-color="#2a8cf0"/><stop offset=".45" stop-color="#37c5b4"/><stop offset=".75" stop-color="#c9d53a"/><stop offset="1" stop-color="#f2a72e"/></linearGradient>
<linearGradient id="c2" x1="0" y1="0" x2="0" y2="1"><stop offset="0" stop-color="#a25cf2"/><stop offset=".5" stop-color="#ee5c9a"/><stop offset="1" stop-color="#f6763c"/></linearGradient>
<linearGradient id="c3" x1="0" y1="0" x2="1" y2="0"><stop offset="0" stop-color="#2a9df4"/><stop offset="1" stop-color="#1a55d8"/></linearGradient></defs>
<path d="M7.5 0.5h7.8c1.6 0 2.6 1 3 2.4l.8 3H13c-1.6 0-2.4.8-2.9 2.2l-2 6.8c-.4 1.4-1.6 2.1-2.9 2.1H3.2C1 17 .2 15.300 .8 13.200L3.600 3.400C4.100 1.600 5.600.5 7.500.5z" fill="url(#c1)"/>
<path d="M9.200.5h6.100c1.600 0 2.600 1 3 2.400l.800 3H13c-1.200 0-2 .5-2.500 1.400z" fill="url(#c3)"/>
<path d="M16.500 21.500H8.700c-1.600 0-2.600-1-3-2.400l-.8-3H11c1.600 0 2.400-.8 2.900-2.200l2-6.800c.4-1.400 1.600-2.100 2.900-2.100h2c2.200 0 3 1.700 2.400 3.800l-2.800 9.800c-.5 1.800-2 2.900-3.900 2.900z" fill="url(#c2)"/></svg><svg class="a" style="left:451px;top:733px;" width="24" height="21.5" viewBox="0 0 24 21.5"><defs><linearGradient id="fg" x1="0" y1="0" x2="0" y2="1"><stop offset="0" stop-color="#ffd75e"/><stop offset="1" stop-color="#f7b928"/></linearGradient></defs>
<path d="M1.200 0h7c.6 0 1 .2 1.400.7L11 2.500H1a1 1 0 0 0-1 1V1.200A1.200 1.200 0 0 1 1.200 0z" fill="#dd9f05"/><path d="M0 2.500h9.800l1.400.3H23a1 1 0 0 1 1 1V20a1 1 0 0 1-1 1H1a1 1 0 0 1-1-1z" fill="url(#fg)"/><path d="M0 2.300h9.200c.8 0 1.200.3 1.800.5H0z" fill="#e5a50a"/>
<path d="M4.400 21v-4.200a2 2 0 0 1 2-2h11.200a2 2 0 0 1 2 2V21z" fill="#1683d8"/><rect x="7.500" y="17.600" width="9" height="1.400" rx=".7" fill="#0d63b0"/></svg><svg class="a" style="left:494.7px;top:731.7px;" width="24.5" height="24.5" viewBox="0 0 24 24"><defs><linearGradient id="e1" x1="0" y1="0" x2="1" y2="1"><stop offset="0" stop-color="#2fc1f0"/><stop offset=".5" stop-color="#1b7fd8"/><stop offset="1" stop-color="#1352a8"/></linearGradient><linearGradient id="e2" x1="0" y1="0" x2="1" y2="0"><stop offset="0" stop-color="#2a9fe6"/><stop offset=".5" stop-color="#35c3b8"/><stop offset="1" stop-color="#74dd58"/></linearGradient></defs>
<circle cx="12" cy="12" r="12" fill="url(#e1)"/>
<path d="M1.500 7C4 2 8.500 0 12.500 0 19 0 24 4.800 24 10.500c0 3.400-2.600 5.700-5.700 5.700-2.300 0-3.800-.8-3.800-2 0-.8.900-1 .9-2.600 0-2.100-2.100-4.200-5.200-4.200C6.500 7.400 3 10 1.500 7z" fill="url(#e2)"/>
<path d="M9 12.500c0-1.600 1.300-3 3.200-3 1.700 0 3.200 1.100 3.200 2.400 0 1.400-.9 1.700-.9 2.500 0 1 1.500 1.800 3.600 1.800 1.500 0 3-.6 4.200-1.600.4-.3.800 0 .6.500-1.600 3.800-5.300 5-8 4.400-3.400-.8-5.900-3.800-5.900-7z" fill="#fff" fill-opacity=".92"/>
<path d="M9.500 23.700C5 22 3.500 17 6 13c1-1.700 2.500-2.600 3.200-2.700-.5 1-.5 2.200-.2 3.400.8 3.300 4.400 5.600 8 5.600 1.200 0 2.300-.2 3.300-.7-2.300 3.900-6.600 6.200-10.800 5.100z" fill="#1457a8"/></svg><svg class="a" style="left:539px;top:732.5px;" width="23.5" height="23.5" viewBox="0 0 23.5 23.5"><defs><linearGradient id="st" x1="0" y1="0" x2="1" y2="1"><stop offset="0" stop-color="#1769c4"/><stop offset="1" stop-color="#123d80"/></linearGradient></defs>
<path d="M6.500 6V2.400A1.400 1.400 0 0 1 7.900 1h7.500a1.400 1.400 0 0 1 1.400 1.400V6" fill="none" stroke="#35bdf6" stroke-width="1.800"/>
<path d="M1.200 4.500h21a1 1 0 0 1 1 1V20a3 3 0 0 1-3 3H3.200a3 3 0 0 1-3-3V5.500a1 1 0 0 1 1-1z" fill="url(#st)"/>
<rect x="7" y="9" width="4.200" height="4.200" fill="#f25022"/><rect x="12.200" y="9" width="4.200" height="4.200" fill="#7fba00"/><rect x="7" y="14.200" width="4.200" height="4.200" fill="#00a4ef"/><rect x="12.200" y="14.200" width="4.200" height="4.200" fill="#ffb900"/></svg><svg class="a" style="left:583px;top:732.5px;" width="24" height="23.5" viewBox="0 0 24 23.5"><path d="M13 0l10.500 5.500V19a1.500 1.500 0 0 1-1.500 1.500H5.500A1.500 1.500 0 0 1 4 19V5.500z" fill="#1490df"/><path d="M13 0l10.500 5.500-8 5z" fill="#28a8ea"/><path d="M23.500 5.500L13 12l10.500 6.500z" fill="#0a5bb0"/><path d="M4 19.500L23.500 8.500V19a1.500 1.500 0 0 1-1.500 1.500H5.500z" fill="#35b8f1"/>
<rect x="0" y="4.500" width="13.500" height="13.500" rx="1.200" fill="#0f6cce"/><ellipse cx="6.800" cy="11.200" rx="3.100" ry="3.500" fill="none" stroke="#fff" stroke-width="1.700"/>
<rect x="7" y="16" width="16.500" height="7" rx="1" fill="#1fe0d8"/><text x="15.300" y="22" font-family="Liberation Sans" font-weight="700" font-size="6.600" text-anchor="middle" fill="#0b3a39">NEW</text></svg><div class="a" style="left:619.5px;top:724px;width:39px;height:39px;background:#f9f9f9;border:1px solid #e4e4e4;border-radius:5px;box-sizing:border-box;"></div><svg class="a" style="left:628px;top:736px;" width="22" height="19.5" viewBox="0 0 22 19.5"><defs><linearGradient id="dg" x1="0" y1="0" x2="1" y2="1"><stop offset="0" stop-color="#e6e6e6"/><stop offset="1" stop-color="#a9a9a9"/></linearGradient></defs>
<path d="M0.500 4.500L12 0.200l9.500 2.600L10 7.800z" fill="#e3e3e3"/><path d="M21.500 2.800v3L10.300 11l-.3-3.200z" fill="#bdbdbd"/><path d="M.5 4.500L10 7.800l.3 3.200-9.800-3.600z" fill="#2e2e2e"/><rect x="7" y="7.600" width="2.200" height="1" fill="#35d335" transform="rotate(18 8 8)"/>
<path d="M.8 9.500l9.500 3.600 4.200-2 .2 5.600-4.500 2.500L.8 15.800z" fill="url(#dg)"/><path d="M10.300 13.100l4.200-2 .2 5.600-4.500 2.500z" fill="#9b9b9b"/><ellipse cx="3.500" cy="13.300" rx="1" ry="1.600" fill="#555"/><ellipse cx="7.500" cy="14.800" rx="1" ry="1.600" fill="#555"/></svg><div class="a" style="left:631px;top:760px;width:16px;height:3px;background:#0a6fd0;border-radius:1.500px;"></div><svg class="a" style="left:727px;top:736.5px;" width="16.5" height="15.125" viewBox="0 0 24 22"><defs><linearGradient id="c1" x1="0" y1="0" x2="0" y2="1"><stop offset="0" stop-color="#2a8cf0"/><stop offset=".45" stop-color="#37c5b4"/><stop offset=".75" stop-color="#c9d53a"/><stop offset="1" stop-color="#f2a72e"/></linearGradient>
<linearGradient id="c2" x1="0" y1="0" x2="0" y2="1"><stop offset="0" stop-color="#a25cf2"/><stop offset=".5" stop-color="#ee5c9a"/><stop offset="1" stop-color="#f6763c"/></linearGradient>
<linearGradient id="c3" x1="0" y1="0" x2="1" y2="0"><stop offset="0" stop-color="#2a9df4"/><stop offset="1" stop-color="#1a55d8"/></linearGradient></defs>
<path d="M7.5 0.5h7.8c1.6 0 2.6 1 3 2.4l.8 3H13c-1.6 0-2.4.8-2.9 2.2l-2 6.8c-.4 1.4-1.6 2.1-2.9 2.1H3.2C1 17 .2 15.300 .8 13.200L3.600 3.400C4.100 1.600 5.600.5 7.500.5z" fill="url(#c1)"/>
<path d="M9.200.5h6.100c1.600 0 2.600 1 3 2.400l.800 3H13c-1.200 0-2 .5-2.500 1.400z" fill="url(#c3)"/>
<path d="M16.500 21.500H8.700c-1.600 0-2.600-1-3-2.400l-.8-3H11c1.600 0 2.400-.8 2.900-2.200l2-6.800c.4-1.400 1.600-2.100 2.900-2.100h2c2.200 0 3 1.700 2.400 3.800l-2.800 9.800c-.5 1.800-2 2.900-3.900 2.900z" fill="url(#c2)"/></svg><svg class="a" style="left:732.5px;top:747px;" width="11" height="5.5" viewBox="0 0 11 5.5"><rect width="11" height="5.500" rx="1" fill="#1f1f1f"/><text x="5.500" y="4.400" font-family="Liberation Sans" font-weight="700" font-size="4.200" text-anchor="middle" fill="#fff">M365</text></svg><svg class="a" style="left:759.5px;top:736px;" width="17" height="17" viewBox="0 0 17 17"><path d="M7.300 0C5.200 1.600 2.800 2.300.300 2.400v5.400c0 4 3 6.600 7 8 4-1.400 7-4 7-8V2.400C11.800 2.300 9.400 1.600 7.300 0z" fill="#1f8fe8"/><path d="M7.300 0C5.200 1.600 2.800 2.300.3 2.400v5.400h7z" fill="#4cc2f7"/><path d="M7.300 7.800h7c0 4-3 6.600-7 8z" fill="#1565c7"/><path d="M11 6l5.200 9.800H5.800z" fill="#fcc419" stroke="#eee" stroke-width=".6" stroke-linejoin="round"/><rect x="10.450" y="9.300" width="1.100" height="3.600" fill="#222"/><rect x="10.450" y="13.600" width="1.100" height="1.100" fill="#222"/></svg><svg class="a" style="left:790.5px;top:737px;" width="17" height="14" viewBox="0 0 17 14"><path d="M4.300 12.200a3.300 3.300 0 0 1-.4-6.600A4.500 4.500 0 0 1 12.400 4.300a3.500 3.500 0 0 1 .3 7c-.4.600-1 .9-1.700.9z" fill="#c4c4c4" stroke="#2a2a2a" stroke-width=".9"/><path d="M1.500.8l13 12.600" stroke="#2a2a2a" stroke-width="1.100"/></svg><span id="t90" class="t" style="left:825.5px;top:739.5px;font-size:11.5px;line-height:11.5px;color:#1a1a1a;transform:scaleX(0.9229);">ENG</span><svg class="a" style="left:867px;top:735.5px;" width="17" height="16" viewBox="0 0 17 16"><rect x=".600" y=".900" width="11.800" height="11" rx="1" fill="none" stroke="#1a1a1a" stroke-width="1.200"/><path d="M4 14.900h8.500M5.600 12v2.800M9.300 12v2.800" stroke="#1a1a1a" stroke-width="1.100"/><rect x="12" y=".4" width="3.700" height="6" rx="1.200" fill="#eee" stroke="#1a1a1a" stroke-width="1.100"/><rect x="13.300" y="1.800" width="1.100" height="1.600" fill="#1a1a1a"/><path d="M13.850 6.400v9.400" stroke="#1a1a1a" stroke-width="1.200"/></svg><svg class="a" style="left:890.5px;top:737px;" width="17" height="13" viewBox="0 0 17 13"><path d="M.6 4.500h2.600L6.800 1v11L3.200 8.500H.6z" fill="none" stroke="#1a1a1a" stroke-width="1.100" stroke-linejoin="round"/><path d="M9 4a3.600 3.600 0 0 1 0 5M11.200 2.300a6 6 0 0 1 0 8.400M13.500.7a8.300 8.300 0 0 1 0 11.600" fill="none" stroke="#1a1a1a" stroke-width="1.100" stroke-linecap="round"/></svg><svg class="a" style="left:914.5px;top:736.3px;" width="17" height="13" viewBox="0 0 17 13"><rect x="1.200" y="3.700" width="13.300" height="8.700" rx="2.200" fill="none" stroke="#1a1a1a" stroke-width="1.200"/><rect x="3" y="5.500" width="9.700" height="5.100" rx=".8" fill="#1a1a1a"/><path d="M14.900 6.300h.7a.9.9 0 0 1 .9.900v1.700a.9.900 0 0 1-.9.900h-.7z" fill="#1a1a1a"/><path d="M4 -.2L.3 4.600h2.100L1.200 7.600 5.200 2.900H3z" fill="#111" stroke="#eee" stroke-width="1.300" paint-order="stroke" stroke-linejoin="round"/></svg><span id="t91" class="t" style="right:19.4px;transform-origin:right top;top:730.5px;font-size:11px;line-height:11px;color:#1a1a1a;transform:scaleX(1.0352);">10:42</span><span id="t92" class="t" style="right:19.4px;transform-origin:right top;top:746.5px;font-size:11px;line-height:11px;color:#1a1a1a;transform:scaleX(1.0544);">16.11.2025</span></div><svg class="a" style="left:650px;top:851px;" width="17" height="20" viewBox="0 0 17 20"><rect x=".5" y=".5" width="16" height="19" rx="1.500" fill="#6cc3f7" stroke="#49a6ea"/><circle cx="8.200" cy="8.600" r="6.300" fill="#fff"/><circle cx="8.400" cy="8" r="2" fill="#2f86d6"/><path d="M10 9.500C8.500 12.500 6 14.500 2.800 16.300" stroke="#2f86d6" stroke-width="2.400" fill="none" stroke-linecap="round"/></svg><svg class="a" style="left:674px;top:851px;" width="20" height="20" viewBox="0 0 20 20"><defs><linearGradient id="od" x1="0" y1="0" x2="0" y2="1"><stop offset="0" stop-color="#a9e3fd"/><stop offset="1" stop-color="#55b3f1"/></linearGradient></defs><circle cx="10" cy="10" r="9.700" fill="url(#od)"/><circle cx="10" cy="10" r="1.900" fill="#101828"/></svg><svg class="a" style="left:697px;top:851px;" width="20" height="20" viewBox="0 0 20 20"><defs><linearGradient id="au" x1="0" y1="0" x2="1" y2="0"><stop offset="0" stop-color="#4aaef0"/><stop offset="1" stop-color="#8fd6fc"/></linearGradient></defs><rect x="0" y="7" width="1.600" height="5" fill="#3f9cec"/><path d="M1.500 .500L9 7h4v6.500H9L1.500 19.500z" fill="url(#au)"/><rect x="9" y="3" width="9.500" height="12.500" rx="3" fill="#6a6a6a"/><path d="M9 7h4v6.500H9z" fill="#7ccbf9"/><path d="M13.500 5.500h4.500M13.500 7.500h4.500M13.500 9.500h4.500M13.500 11.500h4.500" stroke="#8a8a8a" stroke-width=".7"/><path d="M14 15.500v2.500M9 18.800h9.500" stroke="#5e5e5e" stroke-width="1.400"/></svg><svg class="a" style="left:721px;top:851px;" width="20" height="20" viewBox="0 0 20 20"><rect x="6.500" y="1" width="12.500" height="10.500" fill="#2a6fd6" stroke="#e8f2ff" stroke-width="1.300"/><rect x="1" y="7.500" width="12.500" height="11" fill="#1f64d0" stroke="#fff" stroke-width="1.500"/></svg><svg class="a" style="left:745px;top:851px;" width="20" height="20" viewBox="0 0 20 20"><path d="M.8 19.200c-.6-.6-.3-1.500.4-2l1.500-1C2.500 12.500 4 9.500 6.500 7L10 3.500 15 8.500 11.500 12c-2.500 2.500-5.300 3.800-8.500 4l-1 1.800c-.3.800-.8 1.500-1.200 1.400z" fill="#5dbaf5"/><path d="M10.200 3.300l3.100-3.100 5 5-3.100 3.100z" fill="#f2f9ff"/><rect x="13" y="2.300" width="1.400" height="1.400" fill="#2a2a2a" transform="rotate(45 13.700 3)"/><rect x="15.300" y="4.600" width="1.400" height="1.400" fill="#2a2a2a" transform="rotate(45 16 5.300)"/></svg><svg class="a" style="left:769px;top:851px;" width="20" height="20" viewBox="0 0 20 20"><path d="M.5 4.500L9 4l2.500-3h7v4z" fill="#5b5b5b"/><rect x=".5" y="4.500" width="19" height="15" fill="#6d6d6d"/></svg><svg class="a" style="left:792px;top:851px;" width="20" height="20" viewBox="0 0 20 20"><rect x="1" y="1.200" width="17.500" height="14" fill="#2a6fd6" stroke="#fff" stroke-width="1.500"/><rect x="3.800" y="4" width="12" height="8.400" fill="#2f7be6" stroke="#7db4f5" stroke-width=".8"/><path d="M4.500 17.300h10.500v1.800H4.500z" fill="#fff"/></svg><svg class="a" style="left:816px;top:851px;" width="20" height="20" viewBox="0 0 20 20"><rect x="5.500" y=".5" width="14" height="9" fill="#8fb8f5"/><rect x="3" y="2" width="3.500" height="3.500" rx="1.700" fill="#4f8fe8"/><rect x="1" y="7" width="14" height="12" fill="#1f66d6" stroke="#fff" stroke-width="1.200"/><path d="M6 1h13v8H15V7H6z" fill="#9cc2f8"/></svg><div class="a" style="left:854px;top:851px;width:5px;height:20px;background:#000;"></div><div class="a" style="left:854.8px;top:867.8px;width:3.2px;height:1.2px;background:#27d427;"></div><svg class="a" style="left:839px;top:851px;" width="16" height="20" viewBox="0 0 16 20"><path d="M1.500 3.500c.2-1.600 1.400-2.600 2.800-2l1.200 1.200c2-1 5-1.200 7.500-.2 1.500.6 2.500 2 2.500 4v9c0 1.200-.6 2-1.500 2.500l.5 1.800h-3l-.8-1.500H6.500l-1 1.500h-3l1-2.500C2 15.500 1.200 13 1.500 10c.2-1.500.8-2.800 1.500-3.500C2.200 5.800 1.500 4.800 1.500 3.500z" fill="#7bdc2c"/><path d="M6 6.500l4.200 7.500 3.300-7.500" stroke="#1f5a12" stroke-width="1.500" fill="none"/><path d="M5 5.500l5 2.500 4.500-2.500" stroke="#3a8f1e" stroke-width=".9" fill="none"/><circle cx="2.800" cy="2.500" r=".9" fill="#c8f59a"/></svg><svg class="a" style="left:864px;top:851px;" width="20" height="20" viewBox="0 0 20 20"><ellipse cx="9" cy="10.500" rx="8" ry="9.500" fill="#6cc3f7" transform="rotate(22 9 10.500)"/><path d="M8 1.500c-.5 3 0 5 1.500 7.500" stroke="#e9f6ff" stroke-width=".8" fill="none"/><circle cx="14" cy="4" r="1.200" fill="#14264a"/><path d="M12.500 5.500l3-1.500 4.300 5-7 10-3-2.800 3.700-4.700-3-2z" fill="#7bdc2c"/><path d="M13.500 13.500l-3.700 4.700-1.500-1.400 3.400-5z" fill="#5fbf20"/></svg><svg class="a" style="left:887px;top:851px;" width="20" height="20" viewBox="0 0 20 20"><rect x=".5" y=".5" width="19" height="19" rx="1" fill="#7ccbf9"/><rect x=".5" y=".5" width="19" height="9" rx="1" fill="#9ad9fc"/><path d="M7.500 3h5v6h3.500L10 15.500 4 9h3.500z" fill="#0b3f94"/></svg><span id="t93" class="t" style="left:911.5px;top:853.5px;font-size:15px;line-height:15px;color:#fff;">Right Control</span><svg class="a" style="left:1011px;top:859.5px;" width="11" height="11" viewBox="0 0 11 11"><rect x="8" y="0" width="3" height="3" fill="#9a9a9a"/><rect x="4" y="4" width="3" height="3" fill="#9a9a9a"/><rect x="8" y="4" width="3" height="3" fill="#9a9a9a"/><rect x="0" y="8" width="3" height="3" fill="#9a9a9a"/><rect x="4" y="8" width="3" height="3" fill="#9a9a9a"/><rect x="8" y="8" width="3" height="3" fill="#9a9a9a"/></svg></div><div class="win" style="left:1073px;top:24px"><div class="a" style="left:0px;top:38px;width:1026px;height:41px;background:#1e1e1e;"></div><svg class="a" style="left:10px;top:9px;" width="20" height="20" viewBox="0 0 20 20"><defs><linearGradient id="vbg" x1="0" y1="1" x2="1" y2="0"><stop offset="0" stop-color="#1b7fe0"/><stop offset=".55" stop-color="#4fb4f2"/><stop offset="1" stop-color="#c9f1ff"/></linearGradient></defs>
<rect width="20" height="20" fill="url(#vbg)"/>
<polygon points="0,12.5 10.8,20 0,20" fill="#353a48"/>
<path d="M13.8 0 L6.4 16.8 M11 7 L20 10.3" stroke="#1d3a5c" stroke-width="1.3" fill="none"/>
<rect x="0.3" y="1" width="10.6" height="5.8" rx="1.2" fill="#f4f4f4"/>
<text x="5.6" y="6" font-family="Liberation Sans" font-size="5.6" font-weight="700" text-anchor="middle" fill="#222">x64</text>
<text x="13.2" y="17" font-family="Liberation Serif" font-size="9.5" font-weight="700" text-anchor="middle" fill="#fff">11</text></svg><span id="t94" class="t" style="left:36px;top:11.5px;font-size:15px;line-height:15px;color:#7d7d7d;transform:scaleX(0.9941);">tinyw1125h2tr [Çalışıyor] - Oracle VirtualBox</span><svg class="a" style="left:866px;top:6px;" width="150" height="26" viewBox="0 0 150 26"><path d="M6 12.500h12" stroke="#858585" stroke-width="1.100"/><rect x="64.500" y="7.500" width="11.500" height="11.500" rx="1.800" fill="none" stroke="#858585" stroke-width="1.100"/><path d="M123.500 7.500l11.600 11.600M135.100 7.500l-11.600 11.600" stroke="#858585" stroke-width="1.100"/></svg><span id="t95" class="t" style="left:21.4px;top:50.5px;font-size:14.6px;line-height:14.6px;color:#fff;transform:scaleX(1.0634);">Dosya</span><span id="t96" class="t" style="left:104px;top:50.5px;font-size:14.6px;line-height:14.6px;color:#fff;transform:scaleX(1.1265);">Makine</span><span id="t97" class="t" style="left:195px;top:50.5px;font-size:14.6px;line-height:14.6px;color:#fff;transform:scaleX(1.1258);">Görünüm</span><span id="t98" class="t" style="left:302.5px;top:50.5px;font-size:14.6px;line-height:14.6px;color:#fff;transform:scaleX(1.0733);">Giriş</span><span id="t99" class="t" style="left:374px;top:50.5px;font-size:14.6px;line-height:14.6px;color:#fff;transform:scaleX(1.1378);">Aygıtlar</span><span id="t100" class="t" style="left:468.3px;top:50.5px;font-size:14.6px;line-height:14.6px;color:#fff;transform:scaleX(1.0703);">Yardım</span><div class="guest"><div class="a" style="left:0px;top:0px;width:1024px;height:23px;background:#f3f3f3;"></div><svg class="a" style="left:2px;top:4px;" width="16" height="16" viewBox="0 0 16 16"><path d="M3.5 1.5h10l1.5 4h-13z" fill="#c9c9c9"/><rect x="2" y="5.5" width="13" height="3.5" fill="#3c3c3c"/><rect x="11.6" y="6.4" width="1.6" height="1.4" fill="#35d335"/>
<rect x="1" y="9.5" width="11" height="6" fill="#d8d8d8" stroke="#8a8a8a" stroke-width=".8"/><rect x="3" y="11" width="2" height="2.5" fill="#444"/><rect x="8" y="11" width="2" height="2.5" fill="#444"/></svg><span id="t101" class="t" style="left:23px;top:6px;transform:scaleX(0.9762);">Disk Yönetimi</span><svg class="a" style="left:898px;top:0px;" width="116" height="23" viewBox="0 0 116 23"><path d="M5 10.5h10" stroke="#000" stroke-width="1"/><rect x="50.5" y="7.5" width="7.6" height="7.6" rx="1.6" fill="none" stroke="#000"/><path d="M53 7.3V7a1.6 1.6 0 0 1 1.6-1.6h4.2A1.8 1.8 0 0 1 60.6 7.2v4.4a1.6 1.6 0 0 1-1.6 1.6h-.6" fill="none" stroke="#000"/><path d="M96.5 5.5l9.6 9.6M106.1 5.5l-9.6 9.6" stroke="#000" stroke-width="1.05"/></svg><div class="a" style="left:0px;top:23px;width:1024px;height:22px;background:#fff;"></div><span id="t102" class="t" style="left:10.6px;top:27.5px;transform:scaleX(0.9113);">Dosya</span><span id="t103" class="t" style="left:58px;top:27.5px;transform:scaleX(0.9477);">Eylem</span><span id="t104" class="t" style="left:106px;top:27.5px;transform:scaleX(1.0094);">Görünüm</span><span id="t105" class="t" style="left:173px;top:27.5px;transform:scaleX(0.9630);">Yardım</span><div class="a" style="left:0px;top:45px;width:1024px;height:1px;background:#b8b8b8;"></div><div class="a" style="left:0px;top:46px;width:1024px;height:22px;background:#fff;"></div><svg class="a" style="left:5px;top:51px;" width="16" height="15" viewBox="0 0 16 15"><defs><linearGradient id="ag" x1="0" y1="0" x2="0" y2="1"><stop offset="0" stop-color="#b9b9b9"/><stop offset=".5" stop-color="#7d7d7d"/><stop offset="1" stop-color="#b0b0b0"/></linearGradient></defs><path d="M0.6 7.5 L7.5 0.8 V4.2 H15.4 V10.8 H7.5 V14.2 Z" fill="url(#ag)" stroke="#8f8f8f" stroke-width="1" stroke-linejoin="round"/></svg><svg class="a" style="left:28px;top:51px;" width="16" height="15" viewBox="0 0 16 15"><g transform="translate(16,0) scale(-1,1)"><defs><linearGradient id="ag2" x1="0" y1="0" x2="0" y2="1"><stop offset="0" stop-color="#b9b9b9"/><stop offset=".5" stop-color="#7d7d7d"/><stop offset="1" stop-color="#b0b0b0"/></linearGradient></defs><path d="M0.6 7.5 L7.5 0.8 V4.2 H15.4 V10.8 H7.5 V14.2 Z" fill="url(#ag2)" stroke="#8f8f8f" stroke-width="1" stroke-linejoin="round"/></g></svg><div class="a" style="left:50px;top:49px;width:1px;height:18px;background:#8c8c8c;"></div><div class="a" style="left:81px;top:49px;width:1px;height:18px;background:#8c8c8c;"></div><div class="a" style="left:135px;top:49px;width:1px;height:18px;background:#8c8c8c;"></div><svg class="a" style="left:59px;top:53px;" width="16" height="13" viewBox="0 0 16 13"><rect x=".5" y=".5" width="15" height="12" fill="#fff" stroke="#8b93a5"/><rect x="1" y="1" width="14" height="2.2" fill="#c7ccd8"/><rect x="1" y="3.6" width="14" height=".8" fill="#8b93a5"/><rect x="5.4" y="4.4" width=".8" height="8" fill="#8b93a5"/><path d="M2.2 6.2h2M2.2 8.3h2M2.2 10.4h2" stroke="#2f6fd6" stroke-width="1"/><path d="M11.2 5.6v5.4L7.6 8.3z" fill="#2fb52f"/></svg><svg class="a" style="left:91px;top:50px;" width="13" height="16" viewBox="0 0 13 16"><defs><linearGradient id="hg" x1="0" y1="0" x2="1" y2="0"><stop offset="0" stop-color="#1c3f9e"/><stop offset=".3" stop-color="#2b57c8"/><stop offset="1" stop-color="#6f8fe8"/></linearGradient></defs><rect width="13" height="16" fill="url(#hg)"/><rect width="2.6" height="16" fill="#17358a"/><text x="7.6" y="13" font-family="Liberation Sans" font-weight="700" font-size="13.5" text-anchor="middle" fill="#fff">?</text></svg><svg class="a" style="left:113px;top:53px;" width="16" height="13" viewBox="0 0 16 13"><rect x=".5" y=".5" width="15" height="12" fill="#fff" stroke="#8b93a5"/><rect x="1" y="1" width="14" height="2.2" fill="#c7ccd8"/><rect x="1" y="3.6" width="14" height=".8" fill="#8b93a5"/><rect x="9.8" y="4.4" width=".8" height="8" fill="#8b93a5"/><path d="M11.8 6.2h2M11.8 8.3h2M11.8 10.4h2" stroke="#2f6fd6" stroke-width="1"/><path d="M4.4 5.6v5.4L8 8.3z" fill="#2fb52f"/></svg><svg class="a" style="left:143px;top:52px;" width="16" height="14" viewBox="0 0 16 14"><path d="M3.5 1h10l1.2 3.4H2.3z" fill="#cfcfcf"/><rect x="2.3" y="4.4" width="12.6" height="3.6" fill="#3a3a3a"/><rect x="10.5" y="5.3" width="2.6" height="1.8" fill="#28d028"/><circle cx="6.6" cy="6" r="2.9" fill="#a9c7e8" fill-opacity=".85" stroke="#7b8da3" stroke-width=".9"/><path d="M4.6 8.2L0.6 12.6" stroke="#6c7a8a" stroke-width="1.3"/></svg><svg class="a" style="left:167px;top:52px;" width="16" height="12" viewBox="0 0 16 12"><rect x=".5" y=".5" width="15" height="11" fill="#fff" stroke="#7f8796"/><rect x="1" y="1" width="14" height="1.6" fill="#9aa1b0"/><path d="M2.8 4.8l1.2 1.3 2-2.4M2.8 8.2l1.2 1.3 2-2.4" stroke="#2e8be6" stroke-width="1.1" fill="none"/><path d="M8 5h5M8 8.6h5" stroke="#b8bcc6" stroke-width="1"/></svg><div class="a" style="left:0px;top:68px;width:1024px;height:1px;background:#e2e2e2;"></div><div class="a" style="left:1px;top:75px;width:1022px;height:246px;background:#fff;"></div><div class="a" style="left:1px;top:75px;width:1022px;height:1px;background:#707070;"></div><div class="a" style="left:1px;top:76px;width:1022px;height:1px;background:#a0a0a0;"></div><div class="a" style="left:1px;top:75px;width:1px;height:246px;background:#707070;"></div><div class="a" style="left:2px;top:76px;width:1px;height:245px;background:#a0a0a0;"></div><div class="a" style="left:3px;top:77px;width:1019px;height:17px;background:#f0f0f0;"></div><div class="a" style="left:3px;top:93px;width:1019px;height:1px;background:#a0a0a0;"></div><div class="a" style="left:3px;top:94px;width:1019px;height:1px;background:#6f6f6f;"></div><div class="a" style="left:3px;top:95px;width:1019px;height:1px;background:#b4b4b4;"></div><span id="t106" class="t" style="left:8px;top:81px;transform:scaleX(1.0246);">Birim</span><span id="t107" class="t" style="left:137px;top:81px;transform:scaleX(0.9514);">Düzen</span><span id="t108" class="t" style="left:213px;top:81px;transform:scaleX(0.9444);">Tür</span><span id="t109" class="t" style="left:281px;top:81px;transform:scaleX(0.9519);">Dosya Sistemi</span><span id="t110" class="t" style="left:367px;top:81px;transform:scaleX(1.0273);">Durum</span><span id="t111" class="t" style="left:444px;top:81px;transform:scaleX(0.9421);">Kapasite</span><span id="t112" class="t" style="left:540px;top:81px;transform:scaleX(0.9710);">Boş Alan</span><span id="t113" class="t" style="left:606px;top:81px;transform:scaleX(0.9225);">% Boş</span><div class="a" style="left:129px;top:77px;width:1px;height:16px;background:#a9a9a9;"></div><div class="a" style="left:130px;top:77px;width:1px;height:17px;background:#6f6f6f;"></div><div class="a" style="left:131px;top:77px;width:1px;height:16px;background:#fff;"></div><div class="a" style="left:205px;top:77px;width:1px;height:16px;background:#a9a9a9;"></div><div class="a" style="left:206px;top:77px;width:1px;height:17px;background:#6f6f6f;"></div><div class="a" style="left:207px;top:77px;width:1px;height:16px;background:#fff;"></div><div class="a" style="left:273px;top:77px;width:1px;height:16px;background:#a9a9a9;"></div><div class="a" style="left:274px;top:77px;width:1px;height:17px;background:#6f6f6f;"></div><div class="a" style="left:275px;top:77px;width:1px;height:16px;background:#fff;"></div><div class="a" style="left:359px;top:77px;width:1px;height:16px;background:#a9a9a9;"></div><div class="a" style="left:360px;top:77px;width:1px;height:17px;background:#6f6f6f;"></div><div class="a" style="left:361px;top:77px;width:1px;height:16px;background:#fff;"></div><div class="a" style="left:436px;top:77px;width:1px;height:16px;background:#a9a9a9;"></div><div class="a" style="left:437px;top:77px;width:1px;height:17px;background:#6f6f6f;"></div><div class="a" style="left:438px;top:77px;width:1px;height:16px;background:#fff;"></div><div class="a" style="left:532px;top:77px;width:1px;height:16px;background:#a9a9a9;"></div><div class="a" style="left:533px;top:77px;width:1px;height:17px;background:#6f6f6f;"></div><div class="a" style="left:534px;top:77px;width:1px;height:16px;background:#fff;"></div><div class="a" style="left:598px;top:77px;width:1px;height:16px;background:#a9a9a9;"></div><div class="a" style="left:599px;top:77px;width:1px;height:17px;background:#6f6f6f;"></div><div class="a" style="left:600px;top:77px;width:1px;height:16px;background:#fff;"></div><div class="a" style="left:689px;top:77px;width:1px;height:16px;background:#a9a9a9;"></div><div class="a" style="left:690px;top:77px;width:1px;height:17px;background:#6f6f6f;"></div><div class="a" style="left:691px;top:77px;width:1px;height:16px;background:#fff;"></div><svg class="a" style="left:5px;top:100px;" width="14" height="8" viewBox="0 0 14 8"><path d="M1.2 0h11.6l1.2 3.2H0z" fill="#cfcfcf"/><rect x="0" y="3.2" width="14" height="4.3" fill="#3a3a3a"/><rect x="10" y="4.5" width="1.8" height="1.6" fill="#3fe03f"/></svg><span id="t114" class="t" style="left:22px;top:98.5px;transform:scaleX(0.9002);">&nbsp;(C:)</span><span id="t115" class="t" style="left:137px;top:98.5px;transform:scaleX(0.9368);">Basit</span><span id="t116" class="t" style="left:213px;top:98.5px;">Temel</span><span id="t117" class="t" style="left:281px;top:98.5px;transform:scaleX(0.8614);">NTFS</span><span id="t118" class="t" style="left:367px;top:98.5px;transform:scaleX(0.9501);">Sağlam (Ö...</span><span id="t119" class="t" style="left:444px;top:98.5px;transform:scaleX(0.8875);">79,06 GB</span><span id="t120" class="t" style="left:540px;top:98.5px;transform:scaleX(0.8875);">64,18 GB</span><span id="t121" class="t" style="left:606px;top:98.5px;transform:scaleX(0.9138);">81 %</span><svg class="a" style="left:5px;top:117px;" width="14" height="8" viewBox="0 0 14 8"><path d="M1.2 0h11.6l1.2 3.2H0z" fill="#cfcfcf"/><rect x="0" y="3.2" width="14" height="4.3" fill="#3a3a3a"/><rect x="10" y="4.5" width="1.8" height="1.6" fill="#3fe03f"/></svg><span id="t122" class="t" style="left:22px;top:115.5px;transform:scaleX(0.9697);">(Disk 0 Bölüm 1)</span><span id="t123" class="t" style="left:137px;top:115.5px;transform:scaleX(0.9368);">Basit</span><span id="t124" class="t" style="left:213px;top:115.5px;">Temel</span><span id="t125" class="t" style="left:367px;top:115.5px;transform:scaleX(0.9238);">Sağlam (E...</span><span id="t126" class="t" style="left:444px;top:115.5px;transform:scaleX(0.9430);">200 MB</span><span id="t127" class="t" style="left:540px;top:115.5px;transform:scaleX(0.9430);">200 MB</span><span id="t128" class="t" style="left:606px;top:115.5px;transform:scaleX(0.9109);">100 %</span><svg class="a" style="left:5px;top:134px;" width="14" height="8" viewBox="0 0 14 8"><path d="M1.2 0h11.6l1.2 3.2H0z" fill="#cfcfcf"/><rect x="0" y="3.2" width="14" height="4.3" fill="#3a3a3a"/><rect x="10" y="4.5" width="1.8" height="1.6" fill="#3fe03f"/></svg><span id="t129" class="t" style="left:22px;top:132.5px;transform:scaleX(0.9697);">(Disk 0 Bölüm 4)</span><span id="t130" class="t" style="left:137px;top:132.5px;transform:scaleX(0.9368);">Basit</span><span id="t131" class="t" style="left:213px;top:132.5px;">Temel</span><span id="t132" class="t" style="left:367px;top:132.5px;transform:scaleX(0.9389);">Sağlam (K...</span><span id="t133" class="t" style="left:444px;top:132.5px;transform:scaleX(0.9430);">739 MB</span><span id="t134" class="t" style="left:540px;top:132.5px;transform:scaleX(0.9430);">739 MB</span><span id="t135" class="t" style="left:606px;top:132.5px;transform:scaleX(0.9109);">100 %</span><svg class="a" style="left:5px;top:145px;" width="15" height="14" viewBox="0 0 15 14"><path d="M1.2 7h11.6l1.2 3H0z" fill="#cfcfcf"/><rect x="0" y="9.8" width="14" height="4" fill="#3a3a3a"/><rect x="10" y="11" width="1.8" height="1.5" fill="#3fe03f"/>
<circle cx="9.6" cy="4.8" r="4.5" fill="#d9d9d9" stroke="#9a9a9a" stroke-width=".9"/><circle cx="9.6" cy="4.8" r="1.5" fill="#fff" stroke="#9a9a9a" stroke-width=".6"/></svg><span id="t136" class="t" style="left:22px;top:149.5px;transform:scaleX(0.9239);">DVD_ROM (D:)</span><span id="t137" class="t" style="left:137px;top:149.5px;transform:scaleX(0.9368);">Basit</span><span id="t138" class="t" style="left:213px;top:149.5px;">Temel</span><span id="t139" class="t" style="left:281px;top:149.5px;transform:scaleX(0.8917);">UDF</span><span id="t140" class="t" style="left:367px;top:149.5px;transform:scaleX(0.9461);">Sağlam (Bi...</span><span id="t141" class="t" style="left:444px;top:149.5px;transform:scaleX(0.8857);">5,22 GB</span><span id="t142" class="t" style="left:540px;top:149.5px;transform:scaleX(0.9637);">0 MB</span><span id="t143" class="t" style="left:606px;top:149.5px;transform:scaleX(0.9184);">0 %</span><div class="a" style="left:1px;top:323px;width:1021px;height:1px;background:#fcfcfc;"></div><div class="a" style="left:1px;top:326px;width:1021px;height:1px;background:#6d6d6d;"></div><div class="a" style="left:1px;top:327px;width:1021px;height:1px;background:#a9a9a9;"></div><div class="a" style="left:1021px;top:323px;width:1px;height:4px;background:#6d6d6d;"></div><div class="a" style="left:1px;top:328px;width:1px;height:366px;background:#6d6d6d;"></div><div class="a" style="left:2px;top:333px;width:103px;height:1px;background:#fff;"></div><div class="a" style="left:105px;top:333px;width:1px;height:99px;background:#a0a0a0;"></div><div class="a" style="left:2px;top:431px;width:104px;height:1px;background:#a0a0a0;"></div><svg class="a" style="left:13px;top:342px;" width="14" height="8" viewBox="0 0 14 8"><path d="M1.2 0h11.6l1.2 3.2H0z" fill="#cfcfcf"/><rect x="0" y="3.2" width="14" height="4.3" fill="#3a3a3a"/><rect x="10" y="4.5" width="1.8" height="1.6" fill="#3fe03f"/></svg><span id="t144" class="t" style="left:29px;top:343px;font-weight:700;transform:scaleX(0.9616);">Disk 0</span><span id="t145" class="t" style="left:11px;top:358px;">Temel</span><span id="t146" class="t" style="left:11px;top:373px;transform:scaleX(0.8875);">79,98 GB</span><span id="t147" class="t" style="left:11px;top:388px;transform:scaleX(0.9930);">Çevrimiçi</span><div class="a" style="left:107px;top:339px;width:205px;height:13px;background:#000080;"></div><div class="a" style="left:107px;top:352px;width:206px;height:75px;background:#fff;box-sizing:border-box;border:1px solid #a3a3a3;border-left-color:#e6e6e6;border-top-color:#e6e6e6;box-shadow:inset 0 0 0 2px #f1f1f1;"></div><div class="a" style="left:110px;top:355px;width:200px;height:1px;background:#9d9d9d;"></div><div class="a" style="left:110px;top:355px;width:1px;height:67px;background:#9d9d9d;"></div><span id="t148" class="t" style="left:114px;top:375px;transform:scaleX(0.9430);">200 MB</span><span id="t149" class="t" style="left:114px;top:390px;transform:scaleX(0.9566);">Sağlam (EFI Sistem Bölümü)</span><div class="a" style="left:313px;top:338px;width:1px;height:89px;background:#a0a0a0;"></div><div class="a" style="left:315px;top:339px;width:442px;height:13px;background:#000080;"></div><div class="a" style="left:315px;top:352px;width:443px;height:75px;background:#fff;box-sizing:border-box;border:1px solid #a3a3a3;border-left-color:#e6e6e6;border-top-color:#e6e6e6;box-shadow:inset 0 0 0 2px #f1f1f1;"></div><div class="a" style="left:318px;top:355px;width:437px;height:1px;background:#9d9d9d;"></div><div class="a" style="left:318px;top:355px;width:1px;height:67px;background:#9d9d9d;"></div><span id="t150" class="t" style="left:322px;top:360px;font-weight:700;transform:scaleX(0.8599);">&nbsp;&nbsp;(C:)</span><span id="t151" class="t" style="left:322px;top:375px;transform:scaleX(0.8785);">79,06 GB NTFS</span><span id="t152" class="t" style="left:322px;top:390px;transform:scaleX(0.9776);">Sağlam (Önyükleme, Disk Belleği Dosyası, Kilitlenme Bilgisi, Temel Veri Bölümü)</span><div class="a" style="left:758px;top:338px;width:1px;height:89px;background:#a0a0a0;"></div><div class="a" style="left:760px;top:339px;width:259px;height:13px;background:#000080;"></div><div class="a" style="left:760px;top:352px;width:260px;height:75px;background:#fff;box-sizing:border-box;border:1px solid #a3a3a3;border-left-color:#e6e6e6;border-top-color:#e6e6e6;box-shadow:inset 0 0 0 2px #f1f1f1;"></div><div class="a" style="left:763px;top:355px;width:254px;height:1px;background:#9d9d9d;"></div><div class="a" style="left:763px;top:355px;width:1px;height:67px;background:#9d9d9d;"></div><span id="t153" class="t" style="left:767px;top:375px;transform:scaleX(0.9430);">739 MB</span><span id="t154" class="t" style="left:767px;top:390px;transform:scaleX(0.9904);">Sağlam (Kurtarma Bölümü)</span><div class="a" style="left:106px;top:430px;width:916px;height:1px;background:#a0a0a0;"></div><div class="a" style="left:2px;top:432px;width:103px;height:1px;background:#fff;"></div><div class="a" style="left:105px;top:432px;width:1px;height:99px;background:#a0a0a0;"></div><div class="a" style="left:2px;top:530px;width:104px;height:1px;background:#a0a0a0;"></div><svg class="a" style="left:13.3px;top:437.5px;" width="15" height="14" viewBox="0 0 15 14"><path d="M1.2 7h11.6l1.2 3H0z" fill="#cfcfcf"/><rect x="0" y="9.8" width="14" height="4" fill="#3a3a3a"/><rect x="10" y="11" width="1.8" height="1.5" fill="#3fe03f"/>
<circle cx="9.6" cy="4.8" r="4.5" fill="#d9d9d9" stroke="#9a9a9a" stroke-width=".9"/><circle cx="9.6" cy="4.8" r="1.5" fill="#fff" stroke="#9a9a9a" stroke-width=".6"/></svg><span id="t155" class="t" style="left:29px;top:442px;font-weight:700;transform:scaleX(1.0111);">CD-ROM 0</span><span id="t156" class="t" style="left:11px;top:457px;transform:scaleX(0.9528);">CD-ROM</span><span id="t157" class="t" style="left:11px;top:472px;transform:scaleX(0.8857);">5,22 GB</span><span id="t158" class="t" style="left:11px;top:487px;transform:scaleX(0.9930);">Çevrimiçi</span><div class="a" style="left:106px;top:433px;width:697px;height:97px;border-right:1px solid #a0a0a0;border-bottom:1px solid #a0a0a0;box-sizing:border-box;"></div><div class="a" style="left:107px;top:438px;width:691px;height:13px;background:#000080;"></div><div class="a" style="left:107px;top:451px;width:692px;height:75px;background:#fff;box-sizing:border-box;border:1px solid #a3a3a3;border-left-color:#e6e6e6;border-top-color:#e6e6e6;box-shadow:inset 0 0 0 2px #f1f1f1;"></div><div class="a" style="left:110px;top:454px;width:686px;height:1px;background:#9d9d9d;"></div><div class="a" style="left:110px;top:454px;width:1px;height:67px;background:#9d9d9d;"></div><span id="t159" class="t" style="left:114px;top:459px;font-weight:700;transform:scaleX(0.9791);">DVD_ROM&nbsp; (D:)</span><span id="t160" class="t" style="left:114px;top:474px;transform:scaleX(0.8885);">5,22 GB UDF</span><span id="t161" class="t" style="left:114px;top:489px;transform:scaleX(1.0051);">Sağlam (Birincil bölüm)</span><div class="a" style="left:2px;top:675px;width:1019px;height:1px;background:#fff;"></div><div class="a" style="left:8px;top:679px;width:10px;height:12px;background:#000;"></div><div class="a" style="left:89px;top:679px;width:10px;height:12px;background:#000080;"></div><span id="t162" class="t" style="left:23px;top:679px;transform:scaleX(1.0034);">Ayrılmamış</span><span id="t163" class="t" style="left:104px;top:679px;transform:scaleX(1.0370);">Birincil bölüm</span><div class="a" style="left:1px;top:693px;width:1021px;height:1px;background:#8c8c8c;"></div><div class="a" style="left:1px;top:694px;width:1021px;height:1px;background:#c4c4c4;"></div><div class="a" style="left:1021px;top:676px;width:1px;height:18px;background:#a0a0a0;"></div><div class="a" style="left:0px;top:695px;width:1024px;height:1px;background:#fff;"></div><div class="a" style="left:803px;top:698px;width:1px;height:20px;background:#d7d7d7;"></div><div class="a" style="left:936px;top:698px;width:1px;height:20px;background:#d7d7d7;"></div><div class="a" style="left:1021px;top:698px;width:1px;height:20px;background:#d7d7d7;"></div><div class="a" style="left:0px;top:720px;width:1024px;height:1px;background:#b9b9b9;"></div><div class="a" style="left:0px;top:721px;width:1024px;height:47px;background:#eeeeee;"></div><div class="a" style="left:693.5px;top:724px;width:39px;height:39px;background:#f9f9f9;border:1px solid #e4e4e4;border-radius:5px;box-sizing:border-box;"></div><svg class="a" style="left:702px;top:736px;" width="22" height="19.5" viewBox="0 0 22 19.5"><defs><linearGradient id="dg" x1="0" y1="0" x2="1" y2="1"><stop offset="0" stop-color="#e6e6e6"/><stop offset="1" stop-color="#a9a9a9"/></linearGradient></defs>
<path d="M0.500 4.500L12 0.200l9.500 2.600L10 7.800z" fill="#e3e3e3"/><path d="M21.500 2.800v3L10.300 11l-.3-3.200z" fill="#bdbdbd"/><path d="M.5 4.500L10 7.800l.3 3.200-9.800-3.600z" fill="#2e2e2e"/><rect x="7" y="7.600" width="2.200" height="1" fill="#35d335" transform="rotate(18 8 8)"/>
<path d="M.8 9.500l9.500 3.600 4.200-2 .2 5.600-4.500 2.500L.8 15.800z" fill="url(#dg)"/><path d="M10.300 13.100l4.200-2 .2 5.600-4.500 2.500z" fill="#9b9b9b"/><ellipse cx="3.500" cy="13.300" rx="1" ry="1.600" fill="#555"/><ellipse cx="7.500" cy="14.800" rx="1" ry="1.600" fill="#555"/></svg><div class="a" style="left:705px;top:760px;width:16px;height:3px;background:#0a6fd0;border-radius:1.500px;"></div><svg class="a" style="left:18px;top:734px;" width="27" height="23.5" viewBox="0 0 23 20"><path d="M5.500 16a4.500 4.500 0 0 1-.6-9 6.500 6.500 0 0 1 12.400-1.200A5.200 5.200 0 0 1 18.500 16z" fill="#bcd3f5"/><path d="M5.500 16a4.500 4.500 0 0 1-.6-9c1.800 5 7 6.500 13.600 9z" fill="#a7c3ee"/>
<path d="M8 13.500c1.600 2.200 2.400 3.600 2.400 4.900a2.600 2.600 0 0 1-5.200 0c0-1.300.8-2.700 2.800-4.900zM17.500 13.500c1.600 2.200 2.400 3.600 2.400 4.900a2.600 2.600 0 0 1-5.200 0c0-1.300.8-2.700 2.800-4.900z" fill="#2b7cf7"/></svg><div class="a" style="left:30px;top:726px;width:16px;height:16px;background:#c42b1c;border-radius:8px;"></div><span id="t164" class="t" style="left:35.2px;top:728.5px;font-size:11.5px;line-height:11.5px;color:#fff;">1</span><span id="t165" class="t" style="left:50.7px;top:730px;color:#1a1a1a;transform:scaleX(0.8690);">13°C</span><span id="t166" class="t" style="left:50.7px;top:745.5px;color:#5c5c5c;transform:scaleX(1.0046);">Yağmurlu</span><svg class="a" style="left:301px;top:733px;" width="23" height="23" viewBox="0 0 23 23"><defs><linearGradient id="wg" x1="0" y1="0" x2="1" y2="1"><stop offset="0" stop-color="#52cbfb"/><stop offset=".5" stop-color="#1a9aea"/><stop offset="1" stop-color="#0672cf"/></linearGradient></defs>
<path d="M1 0h10v11H0V1a1 1 0 0 1 1-1zM12.2 0H22a1 1 0 0 1 1 1v10H12.2zM0 12.2h11V23H1a1 1 0 0 1-1-1zM12.2 12.2H23V22a1 1 0 0 1-1 1h-9.8z" fill="url(#wg)"/></svg><div class="a" style="left:337px;top:728px;width:219px;height:31.5px;background:#fbfbfb;border:1px solid #dcdcdc;border-radius:15.700px;box-sizing:border-box;box-shadow:0 1px 1px rgba(0,0,0,.06);"></div><svg class="a" style="left:349px;top:736.5px;" width="15" height="15" viewBox="0 0 15 15"><circle cx="6" cy="6" r="5" fill="none" stroke="#222" stroke-width="1.500"/><path d="M9.800 9.800L14 14" stroke="#222" stroke-width="1.700" stroke-linecap="round"/></svg><span id="t167" class="t" style="left:374px;top:737px;font-size:14px;line-height:14px;color:#5a5a5a;transform:scaleX(0.9634);">Ara</span><svg class="a" style="left:568.7px;top:733px;" width="24" height="22" viewBox="0 0 24 22"><defs><linearGradient id="tv1" x1="0" y1="0" x2="0" y2="1"><stop offset="0" stop-color="#3a3a3a"/><stop offset="1" stop-color="#111"/></linearGradient><linearGradient id="tv2" x1="0" y1="0" x2="1" y2="1"><stop offset="0" stop-color="#fff"/><stop offset="1" stop-color="#dcdcdc"/></linearGradient><linearGradient id="tv3" x1="0" y1="0" x2="1" y2="1"><stop offset="0" stop-color="#dedede"/><stop offset="1" stop-color="#a8a8a8"/></linearGradient></defs>
<rect x="0" y="6.2" width="17.8" height="15.8" rx="1.2" fill="url(#tv1)"/><rect x="6" y="0" width="17.8" height="15.5" rx="1.2" fill="url(#tv2)"/><path d="M6 6.2h11.8v9.3H6z" fill="url(#tv3)"/></svg><svg class="a" style="left:612px;top:733px;" width="24" height="21.5" viewBox="0 0 24 21.5"><defs><linearGradient id="fg" x1="0" y1="0" x2="0" y2="1"><stop offset="0" stop-color="#ffd75e"/><stop offset="1" stop-color="#f7b928"/></linearGradient></defs>
<path d="M1.200 0h7c.6 0 1 .2 1.400.7L11 2.500H1a1 1 0 0 0-1 1V1.200A1.200 1.200 0 0 1 1.200 0z" fill="#dd9f05"/><path d="M0 2.500h9.800l1.400.3H23a1 1 0 0 1 1 1V20a1 1 0 0 1-1 1H1a1 1 0 0 1-1-1z" fill="url(#fg)"/><path d="M0 2.300h9.200c.8 0 1.200.3 1.800.5H0z" fill="#e5a50a"/>
<path d="M4.400 21v-4.200a2 2 0 0 1 2-2h11.200a2 2 0 0 1 2 2V21z" fill="#1683d8"/><rect x="7.500" y="17.600" width="9" height="1.400" rx=".7" fill="#0d63b0"/></svg><svg class="a" style="left:656.7px;top:732.5px;" width="23.5" height="23.5" viewBox="0 0 23.5 23.5"><defs><linearGradient id="st" x1="0" y1="0" x2="1" y2="1"><stop offset="0" stop-color="#1769c4"/><stop offset="1" stop-color="#123d80"/></linearGradient></defs>
<path d="M6.500 6V2.400A1.400 1.400 0 0 1 7.900 1h7.500a1.400 1.400 0 0 1 1.400 1.400V6" fill="none" stroke="#35bdf6" stroke-width="1.800"/>
<path d="M1.200 4.500h21a1 1 0 0 1 1 1V20a3 3 0 0 1-3 3H3.200a3 3 0 0 1-3-3V5.500a1 1 0 0 1 1-1z" fill="url(#st)"/>
<rect x="7" y="9" width="4.200" height="4.200" fill="#f25022"/><rect x="12.200" y="9" width="4.200" height="4.200" fill="#7fba00"/><rect x="7" y="14.200" width="4.200" height="4.200" fill="#00a4ef"/><rect x="12.200" y="14.200" width="4.200" height="4.200" fill="#ffb900"/></svg><svg class="a" style="left:835.5px;top:736px;" width="17" height="17" viewBox="0 0 17 17"><path d="M7.300 0C5.200 1.600 2.800 2.300.300 2.400v5.400c0 4 3 6.600 7 8 4-1.400 7-4 7-8V2.400C11.800 2.300 9.400 1.600 7.300 0z" fill="#1f8fe8"/><path d="M7.300 0C5.200 1.600 2.800 2.300.3 2.400v5.400h7z" fill="#4cc2f7"/><path d="M7.300 7.800h7c0 4-3 6.600-7 8z" fill="#1565c7"/><circle cx="11.800" cy="12" r="4.200" fill="#16923a" stroke="#fff" stroke-width=".7"/><path d="M9.800 12l1.500 1.500 2.700-2.900" fill="none" stroke="#fff" stroke-width="1.200"/></svg><svg class="a" style="left:867px;top:735.5px;" width="17" height="16" viewBox="0 0 17 16"><rect x=".600" y=".900" width="11.800" height="11" rx="1" fill="none" stroke="#1a1a1a" stroke-width="1.200"/><path d="M4 14.900h8.500M5.600 12v2.800M9.300 12v2.800" stroke="#1a1a1a" stroke-width="1.100"/><rect x="12" y=".4" width="3.700" height="6" rx="1.200" fill="#eee" stroke="#1a1a1a" stroke-width="1.100"/><rect x="13.300" y="1.800" width="1.100" height="1.600" fill="#1a1a1a"/><path d="M13.850 6.400v9.400" stroke="#1a1a1a" stroke-width="1.200"/></svg><svg class="a" style="left:890.5px;top:737px;" width="17" height="13" viewBox="0 0 17 13"><path d="M.6 4.500h2.600L6.800 1v11L3.200 8.500H.6z" fill="none" stroke="#1a1a1a" stroke-width="1.100" stroke-linejoin="round"/><path d="M9 4a3.600 3.600 0 0 1 0 5M11.200 2.300a6 6 0 0 1 0 8.400M13.500.7a8.300 8.300 0 0 1 0 11.600" fill="none" stroke="#1a1a1a" stroke-width="1.100" stroke-linecap="round"/></svg><svg class="a" style="left:914.5px;top:736.3px;" width="17" height="13" viewBox="0 0 17 13"><rect x="1.200" y="3.700" width="13.300" height="8.700" rx="2.200" fill="none" stroke="#1a1a1a" stroke-width="1.200"/><rect x="3" y="5.500" width="9.700" height="5.100" rx=".8" fill="#1a1a1a"/><path d="M14.900 6.300h.7a.9.9 0 0 1 .9.900v1.700a.9.900 0 0 1-.9.900h-.7z" fill="#1a1a1a"/><path d="M4 -.2L.3 4.600h2.100L1.200 7.600 5.200 2.900H3z" fill="#111" stroke="#eee" stroke-width="1.300" paint-order="stroke" stroke-linejoin="round"/></svg><span id="t168" class="t" style="right:19.4px;transform-origin:right top;top:730.5px;font-size:11px;line-height:11px;color:#1a1a1a;transform:scaleX(1.0352);">10:42</span><span id="t169" class="t" style="right:19.4px;transform-origin:right top;top:746.5px;font-size:11px;line-height:11px;color:#1a1a1a;transform:scaleX(1.0544);">16.11.2025</span></div><svg class="a" style="left:650px;top:851px;" width="17" height="20" viewBox="0 0 17 20"><rect x=".5" y=".5" width="16" height="19" rx="1.500" fill="#6cc3f7" stroke="#49a6ea"/><circle cx="8.200" cy="8.600" r="6.300" fill="#fff"/><circle cx="8.400" cy="8" r="2" fill="#2f86d6"/><path d="M10 9.500C8.500 12.500 6 14.500 2.800 16.300" stroke="#2f86d6" stroke-width="2.400" fill="none" stroke-linecap="round"/></svg><svg class="a" style="left:674px;top:851px;" width="20" height="20" viewBox="0 0 20 20"><defs><linearGradient id="od" x1="0" y1="0" x2="0" y2="1"><stop offset="0" stop-color="#a9e3fd"/><stop offset="1" stop-color="#55b3f1"/></linearGradient></defs><circle cx="10" cy="10" r="9.700" fill="url(#od)"/><circle cx="10" cy="10" r="1.900" fill="#101828"/></svg><svg class="a" style="left:697px;top:851px;" width="20" height="20" viewBox="0 0 20 20"><defs><linearGradient id="au" x1="0" y1="0" x2="1" y2="0"><stop offset="0" stop-color="#4aaef0"/><stop offset="1" stop-color="#8fd6fc"/></linearGradient></defs><rect x="0" y="7" width="1.600" height="5" fill="#3f9cec"/><path d="M1.500 .500L9 7h4v6.500H9L1.500 19.500z" fill="url(#au)"/><rect x="9" y="3" width="9.500" height="12.500" rx="3" fill="#6a6a6a"/><path d="M9 7h4v6.500H9z" fill="#7ccbf9"/><path d="M13.500 5.500h4.500M13.500 7.500h4.500M13.500 9.500h4.500M13.500 11.500h4.500" stroke="#8a8a8a" stroke-width=".7"/><path d="M14 15.500v2.500M9 18.800h9.500" stroke="#5e5e5e" stroke-width="1.400"/></svg><svg class="a" style="left:721px;top:851px;" width="20" height="20" viewBox="0 0 20 20"><rect x="6.500" y="1" width="12.500" height="10.500" fill="#2a6fd6" stroke="#e8f2ff" stroke-width="1.300"/><rect x="1" y="7.500" width="12.500" height="11" fill="#1f64d0" stroke="#fff" stroke-width="1.500"/></svg><svg class="a" style="left:745px;top:851px;" width="20" height="20" viewBox="0 0 20 20"><path d="M.8 19.200c-.6-.6-.3-1.500.4-2l1.500-1C2.500 12.500 4 9.500 6.500 7L10 3.500 15 8.500 11.500 12c-2.500 2.500-5.300 3.800-8.500 4l-1 1.800c-.3.800-.8 1.500-1.200 1.400z" fill="#5dbaf5"/><path d="M10.200 3.300l3.100-3.100 5 5-3.100 3.100z" fill="#f2f9ff"/><rect x="13" y="2.300" width="1.400" height="1.400" fill="#2a2a2a" transform="rotate(45 13.700 3)"/><rect x="15.300" y="4.600" width="1.400" height="1.400" fill="#2a2a2a" transform="rotate(45 16 5.300)"/></svg><svg class="a" style="left:769px;top:851px;" width="20" height="20" viewBox="0 0 20 20"><path d="M.5 4.500L9 4l2.500-3h7v4z" fill="#5b5b5b"/><rect x=".5" y="4.500" width="19" height="15" fill="#6d6d6d"/></svg><svg class="a" style="left:792px;top:851px;" width="20" height="20" viewBox="0 0 20 20"><rect x="1" y="1.200" width="17.500" height="14" fill="#2a6fd6" stroke="#fff" stroke-width="1.500"/><rect x="3.800" y="4" width="12" height="8.400" fill="#2f7be6" stroke="#7db4f5" stroke-width=".8"/><path d="M4.500 17.300h10.500v1.800H4.500z" fill="#fff"/></svg><svg class="a" style="left:816px;top:851px;" width="20" height="20" viewBox="0 0 20 20"><rect x="5.500" y=".5" width="14" height="9" fill="#8fb8f5"/><rect x="3" y="2" width="3.500" height="3.500" rx="1.700" fill="#4f8fe8"/><rect x="1" y="7" width="14" height="12" fill="#1f66d6" stroke="#fff" stroke-width="1.200"/><path d="M6 1h13v8H15V7H6z" fill="#9cc2f8"/></svg><div class="a" style="left:854px;top:851px;width:5px;height:20px;background:#000;"></div><div class="a" style="left:854.8px;top:867.8px;width:3.2px;height:1.2px;background:#27d427;"></div><svg class="a" style="left:839px;top:851px;" width="16" height="20" viewBox="0 0 16 20"><path d="M1.500 3.500c.2-1.600 1.400-2.600 2.800-2l1.200 1.200c2-1 5-1.200 7.500-.2 1.500.6 2.500 2 2.500 4v9c0 1.200-.6 2-1.500 2.500l.5 1.800h-3l-.8-1.500H6.500l-1 1.500h-3l1-2.500C2 15.500 1.200 13 1.500 10c.2-1.500.8-2.800 1.500-3.500C2.200 5.800 1.500 4.800 1.500 3.500z" fill="#7bdc2c"/><path d="M6 6.500l4.200 7.500 3.300-7.500" stroke="#1f5a12" stroke-width="1.500" fill="none"/><path d="M5 5.500l5 2.500 4.500-2.500" stroke="#3a8f1e" stroke-width=".9" fill="none"/><circle cx="2.800" cy="2.500" r=".9" fill="#c8f59a"/></svg><svg class="a" style="left:864px;top:851px;" width="20" height="20" viewBox="0 0 20 20"><ellipse cx="9" cy="10.500" rx="8" ry="9.500" fill="#6cc3f7" transform="rotate(22 9 10.500)"/><path d="M8 1.500c-.5 3 0 5 1.500 7.500" stroke="#e9f6ff" stroke-width=".8" fill="none"/><circle cx="14" cy="4" r="1.200" fill="#14264a"/><path d="M12.500 5.500l3-1.500 4.300 5-7 10-3-2.800 3.700-4.700-3-2z" fill="#7bdc2c"/><path d="M13.500 13.500l-3.700 4.700-1.500-1.400 3.400-5z" fill="#5fbf20"/></svg><svg class="a" style="left:887px;top:851px;" width="20" height="20" viewBox="0 0 20 20"><rect x=".5" y=".5" width="19" height="19" rx="1" fill="#7ccbf9"/><rect x=".5" y=".5" width="19" height="9" rx="1" fill="#9ad9fc"/><path d="M7.500 3h5v6h3.500L10 15.500 4 9h3.500z" fill="#0b3f94"/></svg><span id="t170" class="t" style="left:911.5px;top:853.5px;font-size:15px;line-height:15px;color:#fff;">Right Control</span><svg class="a" style="left:1011px;top:859.5px;" width="11" height="11" viewBox="0 0 11 11"><rect x="8" y="0" width="3" height="3" fill="#9a9a9a"/><rect x="4" y="4" width="3" height="3" fill="#9a9a9a"/><rect x="8" y="4" width="3" height="3" fill="#9a9a9a"/><rect x="0" y="8" width="3" height="3" fill="#9a9a9a"/><rect x="4" y="8" width="3" height="3" fill="#9a9a9a"/><rect x="8" y="8" width="3" height="3" fill="#9a9a9a"/></svg></div><svg class="a" style="left:939px;top:121px;" width="14" height="21" viewBox="0 0 14 21"><path d="M1 1v16l3.800-3.600 2.700 6.200 2.300-1-2.700-6H12.500z" fill="#fff" stroke="#000" stroke-width="1"/></svg>
</div>
</body></html>
